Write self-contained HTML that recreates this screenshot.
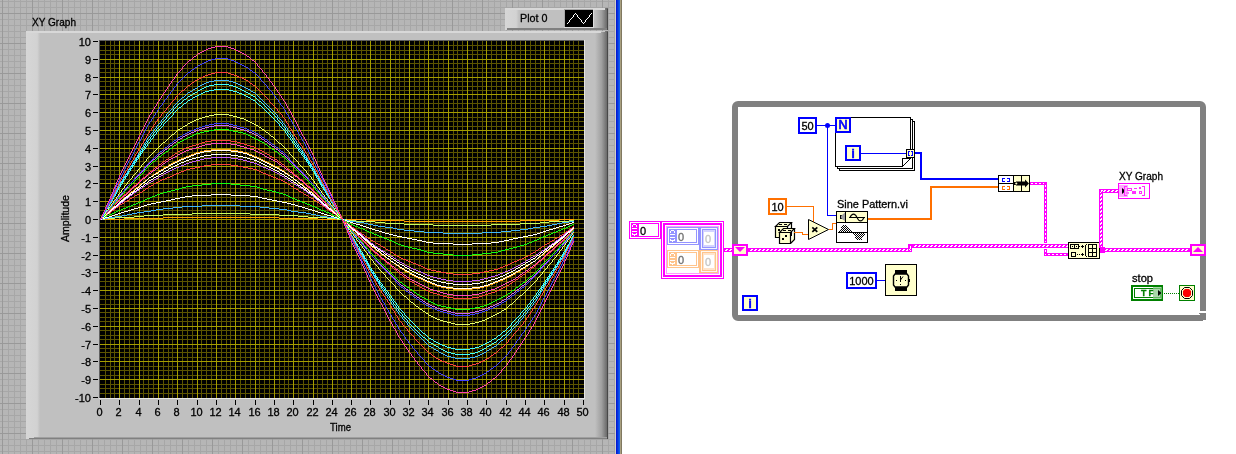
<!DOCTYPE html>
<html><head><meta charset="utf-8"><title>XY Graph</title>
<style>html,body{margin:0;padding:0;background:#fff;}body{width:1236px;height:454px;overflow:hidden;}svg{display:block;will-change:transform;}text{shape-rendering:auto;}</style>
</head><body>
<svg width="1236" height="454" viewBox="0 0 1236 454" font-family="'Liberation Sans', sans-serif" shape-rendering="crispEdges">
<defs>
<pattern id="pgrid" x="2" y="13" width="30" height="30" patternUnits="userSpaceOnUse">
<rect width="30" height="30" fill="#b6b6b6"/>
<rect x="6" y="0" width="1" height="30" fill="#a7a7a7"/><rect x="12" y="0" width="1" height="30" fill="#a7a7a7"/><rect x="18" y="0" width="1" height="30" fill="#a7a7a7"/><rect x="24" y="0" width="1" height="30" fill="#a7a7a7"/>
<rect y="6" x="0" height="1" width="30" fill="#a7a7a7"/><rect y="12" x="0" height="1" width="30" fill="#a7a7a7"/><rect y="18" x="0" height="1" width="30" fill="#a7a7a7"/><rect y="24" x="0" height="1" width="30" fill="#a7a7a7"/>
<rect x="0" y="0" width="1" height="30" fill="#999"/><rect x="0" y="0" width="30" height="1" fill="#999"/>
</pattern>
<linearGradient id="gl" x1="0" x2="1" y1="0" y2="0"><stop offset="0" stop-color="#d6d6d6"/><stop offset="0.8" stop-color="#d2d2d2"/><stop offset="1" stop-color="#c0c0c0"/></linearGradient>
<linearGradient id="gr" x1="0" x2="1" y1="0" y2="0"><stop offset="0" stop-color="#c0c0c0"/><stop offset="0.5" stop-color="#a0a0a0"/><stop offset="1" stop-color="#606060"/></linearGradient>
<linearGradient id="gb" x1="0" x2="1" y1="0" y2="0"><stop offset="0" stop-color="#0010d0"/><stop offset="1" stop-color="#1068f4"/></linearGradient>
<pattern id="wh" x="0" y="0" width="4" height="4" patternUnits="userSpaceOnUse">
<rect width="4" height="4" fill="#ff00ff"/><rect x="1" y="1" width="2" height="1" fill="#fff"/><rect x="0" y="2" width="2" height="1" fill="#fff"/>
</pattern>
<pattern id="wv" x="3" y="0" width="4" height="4" patternUnits="userSpaceOnUse">
<rect width="4" height="4" fill="#ff00ff"/><rect x="2" y="0" width="1" height="2" fill="#fff"/><rect x="1" y="1" width="1" height="2" fill="#fff"/>
</pattern>
<pattern id="w3h" x="0" y="0" width="4" height="3" patternUnits="userSpaceOnUse">
<rect width="4" height="3" fill="#ff00ff"/><rect x="0" y="1" width="2" height="1" fill="#fff"/>
</pattern>
<pattern id="w3v" x="0" y="0" width="3" height="4" patternUnits="userSpaceOnUse">
<rect width="3" height="4" fill="#ff00ff"/><rect x="1" y="0" width="1" height="2" fill="#fff"/>
</pattern>
<pattern id="chk" x="0" y="0" width="2" height="2" patternUnits="userSpaceOnUse">
<rect width="2" height="2" fill="#fff"/><rect x="0" y="0" width="1" height="1" fill="#000"/><rect x="1" y="1" width="1" height="1" fill="#000"/>
</pattern>
</defs>
<rect x="0" y="0" width="1236" height="454" fill="#fff" />
<rect x="0" y="0" width="616" height="454" fill="url(#pgrid)" />
<rect x="615" y="0" width="1" height="454" fill="#d4d0c8" />
<rect x="616" y="0" width="4" height="454" fill="url(#gb)" />
<rect x="620" y="0" width="1" height="454" fill="#a8a080" />
<rect x="621" y="0" width="1" height="454" fill="#807860" />
<rect x="26" y="31" width="582" height="408" fill="#c0c0c0" />
<rect x="26" y="31" width="14" height="408" fill="url(#gl)" />
<rect x="595" y="31" width="13" height="408" fill="url(#gr)" />
<rect x="26" y="31" width="575" height="2" fill="#d8d8d8" />
<rect x="601" y="31" width="4" height="1" fill="#c8c8c8" />
<rect x="34" y="437" width="574" height="1" fill="#a0a0a0" />
<rect x="29" y="438" width="579" height="1" fill="#808080" />
<rect x="607" y="32" width="1" height="407" fill="#484848" />
<rect x="505" y="8" width="103" height="22" fill="#c0c0c0" />
<rect x="505" y="8" width="14" height="22" fill="url(#gl)" />
<rect x="595" y="8" width="13" height="22" fill="url(#gr)" />
<rect x="505" y="8" width="100" height="2" fill="#d8d8d8" />
<rect x="507" y="28" width="101" height="2" fill="#808080" />
<rect x="607" y="9" width="1" height="21" fill="#484848" />
<text x="520" y="22" font-size="11" text-anchor="start" fill="#000" stroke="#000" stroke-width="0.3" textLength="27.5" lengthAdjust="spacingAndGlyphs" >Plot 0</text>
<rect x="564" y="9" width="30" height="19" fill="#dcdcdc" />
<rect x="564" y="9" width="29" height="18" fill="#a8a8a8" />
<rect x="565" y="10" width="28" height="17" fill="#000" />
<path d="M575 13h1M591 13h1M574 14h1M576 14h1M590 14h1M573 15h1M577 15h1M589 15h1M573 16h1M577 16h1M589 16h1M572 17h1M578 17h1M588 17h1M571 18h1M579 18h1M587 18h1M570 19h1M580 19h1M586 19h1M569 20h1M581 20h1M585 20h1M569 21h1M581 21h1M585 21h1M568 22h1M582 22h1M584 22h1M567 23h1M583 23h1" stroke="#fff" stroke-width="1" fill="none" transform="translate(0,0.5)"/>
<text x="32" y="26" font-size="11" text-anchor="start" fill="#000" stroke="#000" stroke-width="0.3" textLength="44" lengthAdjust="spacingAndGlyphs" >XY Graph</text>
<rect x="99" y="40" width="486" height="359" fill="#e4e4e4" />
<rect x="99" y="40" width="485" height="358" fill="#606060" />
<rect x="100" y="41" width="484" height="357" fill="#000" />
<rect x="105" y="41" width="1" height="357" fill="#5c5400" />
<rect x="110" y="41" width="1" height="357" fill="#5c5400" />
<rect x="114" y="41" width="1" height="357" fill="#5c5400" />
<rect x="124" y="41" width="1" height="357" fill="#5c5400" />
<rect x="129" y="41" width="1" height="357" fill="#5c5400" />
<rect x="134" y="41" width="1" height="357" fill="#5c5400" />
<rect x="143" y="41" width="1" height="357" fill="#5c5400" />
<rect x="148" y="41" width="1" height="357" fill="#5c5400" />
<rect x="153" y="41" width="1" height="357" fill="#5c5400" />
<rect x="163" y="41" width="1" height="357" fill="#5c5400" />
<rect x="168" y="41" width="1" height="357" fill="#5c5400" />
<rect x="172" y="41" width="1" height="357" fill="#5c5400" />
<rect x="182" y="41" width="1" height="357" fill="#5c5400" />
<rect x="187" y="41" width="1" height="357" fill="#5c5400" />
<rect x="192" y="41" width="1" height="357" fill="#5c5400" />
<rect x="201" y="41" width="1" height="357" fill="#5c5400" />
<rect x="206" y="41" width="1" height="357" fill="#5c5400" />
<rect x="211" y="41" width="1" height="357" fill="#5c5400" />
<rect x="221" y="41" width="1" height="357" fill="#5c5400" />
<rect x="226" y="41" width="1" height="357" fill="#5c5400" />
<rect x="230" y="41" width="1" height="357" fill="#5c5400" />
<rect x="240" y="41" width="1" height="357" fill="#5c5400" />
<rect x="245" y="41" width="1" height="357" fill="#5c5400" />
<rect x="250" y="41" width="1" height="357" fill="#5c5400" />
<rect x="259" y="41" width="1" height="357" fill="#5c5400" />
<rect x="264" y="41" width="1" height="357" fill="#5c5400" />
<rect x="269" y="41" width="1" height="357" fill="#5c5400" />
<rect x="279" y="41" width="1" height="357" fill="#5c5400" />
<rect x="284" y="41" width="1" height="357" fill="#5c5400" />
<rect x="288" y="41" width="1" height="357" fill="#5c5400" />
<rect x="298" y="41" width="1" height="357" fill="#5c5400" />
<rect x="303" y="41" width="1" height="357" fill="#5c5400" />
<rect x="308" y="41" width="1" height="357" fill="#5c5400" />
<rect x="317" y="41" width="1" height="357" fill="#5c5400" />
<rect x="322" y="41" width="1" height="357" fill="#5c5400" />
<rect x="327" y="41" width="1" height="357" fill="#5c5400" />
<rect x="337" y="41" width="1" height="357" fill="#5c5400" />
<rect x="342" y="41" width="1" height="357" fill="#5c5400" />
<rect x="346" y="41" width="1" height="357" fill="#5c5400" />
<rect x="356" y="41" width="1" height="357" fill="#5c5400" />
<rect x="361" y="41" width="1" height="357" fill="#5c5400" />
<rect x="366" y="41" width="1" height="357" fill="#5c5400" />
<rect x="375" y="41" width="1" height="357" fill="#5c5400" />
<rect x="380" y="41" width="1" height="357" fill="#5c5400" />
<rect x="385" y="41" width="1" height="357" fill="#5c5400" />
<rect x="395" y="41" width="1" height="357" fill="#5c5400" />
<rect x="399" y="41" width="1" height="357" fill="#5c5400" />
<rect x="404" y="41" width="1" height="357" fill="#5c5400" />
<rect x="414" y="41" width="1" height="357" fill="#5c5400" />
<rect x="419" y="41" width="1" height="357" fill="#5c5400" />
<rect x="424" y="41" width="1" height="357" fill="#5c5400" />
<rect x="433" y="41" width="1" height="357" fill="#5c5400" />
<rect x="438" y="41" width="1" height="357" fill="#5c5400" />
<rect x="443" y="41" width="1" height="357" fill="#5c5400" />
<rect x="453" y="41" width="1" height="357" fill="#5c5400" />
<rect x="457" y="41" width="1" height="357" fill="#5c5400" />
<rect x="462" y="41" width="1" height="357" fill="#5c5400" />
<rect x="472" y="41" width="1" height="357" fill="#5c5400" />
<rect x="477" y="41" width="1" height="357" fill="#5c5400" />
<rect x="482" y="41" width="1" height="357" fill="#5c5400" />
<rect x="491" y="41" width="1" height="357" fill="#5c5400" />
<rect x="496" y="41" width="1" height="357" fill="#5c5400" />
<rect x="501" y="41" width="1" height="357" fill="#5c5400" />
<rect x="511" y="41" width="1" height="357" fill="#5c5400" />
<rect x="515" y="41" width="1" height="357" fill="#5c5400" />
<rect x="520" y="41" width="1" height="357" fill="#5c5400" />
<rect x="530" y="41" width="1" height="357" fill="#5c5400" />
<rect x="535" y="41" width="1" height="357" fill="#5c5400" />
<rect x="540" y="41" width="1" height="357" fill="#5c5400" />
<rect x="549" y="41" width="1" height="357" fill="#5c5400" />
<rect x="554" y="41" width="1" height="357" fill="#5c5400" />
<rect x="559" y="41" width="1" height="357" fill="#5c5400" />
<rect x="569" y="41" width="1" height="357" fill="#5c5400" />
<rect x="573" y="41" width="1" height="357" fill="#5c5400" />
<rect x="578" y="41" width="1" height="357" fill="#5c5400" />
<rect x="100" y="45" width="484" height="1" fill="#5c5400" />
<rect x="100" y="50" width="484" height="1" fill="#5c5400" />
<rect x="100" y="54" width="484" height="1" fill="#5c5400" />
<rect x="100" y="63" width="484" height="1" fill="#5c5400" />
<rect x="100" y="68" width="484" height="1" fill="#5c5400" />
<rect x="100" y="72" width="484" height="1" fill="#5c5400" />
<rect x="100" y="81" width="484" height="1" fill="#5c5400" />
<rect x="100" y="86" width="484" height="1" fill="#5c5400" />
<rect x="100" y="90" width="484" height="1" fill="#5c5400" />
<rect x="100" y="99" width="484" height="1" fill="#5c5400" />
<rect x="100" y="103" width="484" height="1" fill="#5c5400" />
<rect x="100" y="108" width="484" height="1" fill="#5c5400" />
<rect x="100" y="117" width="484" height="1" fill="#5c5400" />
<rect x="100" y="121" width="484" height="1" fill="#5c5400" />
<rect x="100" y="126" width="484" height="1" fill="#5c5400" />
<rect x="100" y="134" width="484" height="1" fill="#5c5400" />
<rect x="100" y="139" width="484" height="1" fill="#5c5400" />
<rect x="100" y="143" width="484" height="1" fill="#5c5400" />
<rect x="100" y="152" width="484" height="1" fill="#5c5400" />
<rect x="100" y="157" width="484" height="1" fill="#5c5400" />
<rect x="100" y="161" width="484" height="1" fill="#5c5400" />
<rect x="100" y="170" width="484" height="1" fill="#5c5400" />
<rect x="100" y="174" width="484" height="1" fill="#5c5400" />
<rect x="100" y="179" width="484" height="1" fill="#5c5400" />
<rect x="100" y="188" width="484" height="1" fill="#5c5400" />
<rect x="100" y="192" width="484" height="1" fill="#5c5400" />
<rect x="100" y="197" width="484" height="1" fill="#5c5400" />
<rect x="100" y="206" width="484" height="1" fill="#5c5400" />
<rect x="100" y="210" width="484" height="1" fill="#5c5400" />
<rect x="100" y="215" width="484" height="1" fill="#5c5400" />
<rect x="100" y="223" width="484" height="1" fill="#5c5400" />
<rect x="100" y="228" width="484" height="1" fill="#5c5400" />
<rect x="100" y="232" width="484" height="1" fill="#5c5400" />
<rect x="100" y="241" width="484" height="1" fill="#5c5400" />
<rect x="100" y="246" width="484" height="1" fill="#5c5400" />
<rect x="100" y="250" width="484" height="1" fill="#5c5400" />
<rect x="100" y="259" width="484" height="1" fill="#5c5400" />
<rect x="100" y="264" width="484" height="1" fill="#5c5400" />
<rect x="100" y="268" width="484" height="1" fill="#5c5400" />
<rect x="100" y="277" width="484" height="1" fill="#5c5400" />
<rect x="100" y="281" width="484" height="1" fill="#5c5400" />
<rect x="100" y="286" width="484" height="1" fill="#5c5400" />
<rect x="100" y="295" width="484" height="1" fill="#5c5400" />
<rect x="100" y="299" width="484" height="1" fill="#5c5400" />
<rect x="100" y="304" width="484" height="1" fill="#5c5400" />
<rect x="100" y="312" width="484" height="1" fill="#5c5400" />
<rect x="100" y="317" width="484" height="1" fill="#5c5400" />
<rect x="100" y="321" width="484" height="1" fill="#5c5400" />
<rect x="100" y="330" width="484" height="1" fill="#5c5400" />
<rect x="100" y="335" width="484" height="1" fill="#5c5400" />
<rect x="100" y="339" width="484" height="1" fill="#5c5400" />
<rect x="100" y="348" width="484" height="1" fill="#5c5400" />
<rect x="100" y="352" width="484" height="1" fill="#5c5400" />
<rect x="100" y="357" width="484" height="1" fill="#5c5400" />
<rect x="100" y="366" width="484" height="1" fill="#5c5400" />
<rect x="100" y="370" width="484" height="1" fill="#5c5400" />
<rect x="100" y="375" width="484" height="1" fill="#5c5400" />
<rect x="100" y="384" width="484" height="1" fill="#5c5400" />
<rect x="100" y="388" width="484" height="1" fill="#5c5400" />
<rect x="100" y="393" width="484" height="1" fill="#5c5400" />
<rect x="119" y="41" width="1" height="357" fill="#a49c00" />
<rect x="139" y="41" width="1" height="357" fill="#a49c00" />
<rect x="158" y="41" width="1" height="357" fill="#a49c00" />
<rect x="177" y="41" width="1" height="357" fill="#a49c00" />
<rect x="197" y="41" width="1" height="357" fill="#a49c00" />
<rect x="216" y="41" width="1" height="357" fill="#a49c00" />
<rect x="235" y="41" width="1" height="357" fill="#a49c00" />
<rect x="255" y="41" width="1" height="357" fill="#a49c00" />
<rect x="274" y="41" width="1" height="357" fill="#a49c00" />
<rect x="293" y="41" width="1" height="357" fill="#a49c00" />
<rect x="313" y="41" width="1" height="357" fill="#a49c00" />
<rect x="332" y="41" width="1" height="357" fill="#a49c00" />
<rect x="351" y="41" width="1" height="357" fill="#a49c00" />
<rect x="370" y="41" width="1" height="357" fill="#a49c00" />
<rect x="390" y="41" width="1" height="357" fill="#a49c00" />
<rect x="409" y="41" width="1" height="357" fill="#a49c00" />
<rect x="428" y="41" width="1" height="357" fill="#a49c00" />
<rect x="448" y="41" width="1" height="357" fill="#a49c00" />
<rect x="467" y="41" width="1" height="357" fill="#a49c00" />
<rect x="486" y="41" width="1" height="357" fill="#a49c00" />
<rect x="506" y="41" width="1" height="357" fill="#a49c00" />
<rect x="525" y="41" width="1" height="357" fill="#a49c00" />
<rect x="544" y="41" width="1" height="357" fill="#a49c00" />
<rect x="564" y="41" width="1" height="357" fill="#a49c00" />
<rect x="100" y="59" width="484" height="1" fill="#a49c00" />
<rect x="100" y="77" width="484" height="1" fill="#a49c00" />
<rect x="100" y="94" width="484" height="1" fill="#a49c00" />
<rect x="100" y="112" width="484" height="1" fill="#a49c00" />
<rect x="100" y="130" width="484" height="1" fill="#a49c00" />
<rect x="100" y="148" width="484" height="1" fill="#a49c00" />
<rect x="100" y="166" width="484" height="1" fill="#a49c00" />
<rect x="100" y="183" width="484" height="1" fill="#a49c00" />
<rect x="100" y="201" width="484" height="1" fill="#a49c00" />
<rect x="100" y="219" width="484" height="1" fill="#a49c00" />
<rect x="100" y="237" width="484" height="1" fill="#a49c00" />
<rect x="100" y="255" width="484" height="1" fill="#a49c00" />
<rect x="100" y="272" width="484" height="1" fill="#a49c00" />
<rect x="100" y="290" width="484" height="1" fill="#a49c00" />
<rect x="100" y="308" width="484" height="1" fill="#a49c00" />
<rect x="100" y="326" width="484" height="1" fill="#a49c00" />
<rect x="100" y="344" width="484" height="1" fill="#a49c00" />
<rect x="100" y="361" width="484" height="1" fill="#a49c00" />
<rect x="100" y="379" width="484" height="1" fill="#a49c00" />
<path d="M163 217h116M124 218h39M279 218h39M100 219h24M318 219h48M559 219h15M366 220h38M520 220h39M404 221h116" stroke="#ffa000" stroke-width="1" fill="none" transform="translate(0,0.5)"/>
<path d="M192 213h58M163 214h29M250 214h29M144 215h19M279 215h19M134 216h10M298 216h10M115 217h19M308 217h19M105 218h10M327 218h10M100 219h5M337 219h10M347 220h9M569 220h5M356 221h19M549 221h20M375 222h10M540 222h9M385 223h19M520 223h20M404 224h29M491 224h29M433 225h58" stroke="#c8ff60" stroke-width="1" fill="none" transform="translate(0,0.5)"/>
<path d="M202 205h38M182 206h20M240 206h20M173 207h9M260 207h9M163 208h10M269 208h10M156 209h7M279 209h8M151 210h5M287 210h4M144 211h7M291 211h7M137 212h7M298 212h8M132 213h5M306 213h5M127 214h5M311 214h5M122 215h5M316 215h4M115 216h7M320 216h7M108 217h7M327 217h8M103 218h5M335 218h5M100 219h3M340 219h5M345 220h4M349 221h7M569 221h5M356 222h8M562 222h7M364 223h4M557 223h5M368 224h5M552 224h5M373 225h5M547 225h5M378 226h7M540 226h7M385 227h8M533 227h7M393 228h4M528 228h5M397 229h7M520 229h8M404 230h10M511 230h9M414 231h10M501 231h10M424 232h19M482 232h19M443 233h39" stroke="#40b8ff" stroke-width="1" fill="none" transform="translate(0,0.5)"/>
<path d="M211 194h20M192 195h19M231 195h19M185 196h7M250 196h8M180 197h5M258 197h4M175 198h5M262 198h5M171 199h4M267 199h5M166 200h5M272 200h5M161 201h5M277 201h5M156 202h5M282 202h5M151 203h5M287 203h4M147 204h4M291 204h4M144 205h3M295 205h3M141 206h3M298 206h4M138 207h3M302 207h3M134 208h4M305 208h3M131 209h3M308 209h4M128 210h3M312 210h3M124 211h4M315 211h3M121 212h3M318 212h3M118 213h3M321 213h3M115 214h3M324 214h3M112 215h3M327 215h4M109 216h3M331 216h3M105 217h4M334 217h3M102 218h3M337 218h4M100 219h2M341 219h3M344 220h3M347 221h3M350 222h3M572 222h2M353 223h3M569 223h3M356 224h4M566 224h3M360 225h3M563 225h3M363 226h3M559 226h4M366 227h3M556 227h3M369 228h3M553 228h3M372 229h3M549 229h4M375 230h4M546 230h3M379 231h3M543 231h3M382 232h3M540 232h3M385 233h4M537 233h3M389 234h4M533 234h4M393 235h4M528 235h5M397 236h5M523 236h5M402 237h5M518 237h5M407 238h5M513 238h5M412 239h5M509 239h4M417 240h5M504 240h5M422 241h4M499 241h5M426 242h7M491 242h8M433 243h20M472 243h19M453 244h19" stroke="#ffffff" stroke-width="1" fill="none" transform="translate(0,0.5)"/>
<path d="M211 183h20M202 184h9M231 184h9M192 185h10M240 185h10M186 186h6M250 186h7M182 187h4M257 187h3M179 188h3M260 188h3M175 189h4M263 189h4M171 190h4M267 190h5M167 191h4M272 191h4M163 192h4M276 192h3M160 193h3M279 193h4M157 194h3M283 194h3M155 195h2M286 195h2M152 196h3M288 196h2M150 197h2M290 197h2M147 198h3M292 198h3M145 199h2M295 199h2M143 200h2M297 200h3M141 201h2M300 201h2M138 202h3M302 202h3M136 203h2M305 203h2M133 204h3M307 204h3M131 205h2M310 205h2M128 206h3M312 206h3M126 207h2M315 207h2M123 208h3M317 208h2M121 209h2M319 209h2M118 210h3M321 210h3M116 211h2M324 211h2M114 212h2M326 212h3M112 213h2M329 213h2M109 214h3M331 214h2M107 215h2M333 215h2M105 216h2M335 216h2M103 217h2M337 217h2M101 218h2M339 218h2M100 219h1M341 219h2M343 220h2M345 221h2M347 222h2M349 223h2M351 224h2M572 224h2M353 225h2M570 225h2M355 226h3M568 226h2M358 227h2M566 227h2M360 228h3M563 228h3M363 229h2M561 229h2M365 230h2M558 230h3M367 231h2M556 231h2M369 232h3M553 232h3M372 233h2M551 233h2M374 234h3M548 234h3M377 235h2M546 235h2M379 236h3M543 236h3M382 237h2M541 237h2M384 238h3M539 238h2M387 239h2M537 239h2M389 240h3M534 240h3M392 241h2M532 241h2M394 242h2M529 242h3M396 243h2M527 243h2M398 244h3M524 244h3M401 245h3M520 245h4M404 246h4M517 246h3M408 247h4M513 247h4M412 248h5M509 248h4M417 249h4M505 249h4M421 250h3M501 250h4M424 251h3M498 251h3M427 252h6M491 252h7M433 253h10M482 253h9M443 254h10M472 254h10M453 255h19" stroke="#10ff10" stroke-width="1" fill="none" transform="translate(0,0.5)"/>
<path d="M211 164h20M204 165h7M231 165h7M200 166h4M238 166h5M195 167h5M243 167h5M190 168h5M248 168h5M186 169h4M253 169h4M184 170h2M257 170h2M181 171h3M259 171h2M179 172h2M261 172h2M176 173h3M263 173h3M174 174h2M266 174h2M172 175h2M268 175h3M170 176h2M271 176h2M167 177h3M273 177h3M165 178h2M276 178h2M162 179h3M278 179h3M160 180h2M281 180h2M158 181h2M283 181h2M156 182h2M285 182h2M154 183h2M287 183h1M153 184h1M288 184h2M151 185h2M290 185h1M149 186h2M291 186h2M148 187h1M293 187h1M146 188h2M294 188h2M145 189h1M296 189h2M143 190h2M298 190h1M142 191h1M299 191h2M140 192h2M301 192h2M139 193h1M303 193h1M137 194h2M304 194h2M135 195h2M306 195h2M134 196h1M308 196h1M132 197h2M309 197h2M130 198h2M311 198h2M129 199h1M313 199h1M127 200h2M314 200h2M125 201h2M316 201h1M124 202h1M317 202h2M122 203h2M319 203h1M120 204h2M320 204h2M119 205h1M322 205h1M118 206h1M323 206h2M116 207h2M325 207h1M115 208h1M326 208h1M114 209h1M327 209h2M112 210h2M329 210h1M111 211h1M330 211h2M110 212h1M332 212h1M108 213h2M333 213h2M107 214h1M335 214h1M105 215h2M336 215h1M104 216h1M337 216h2M103 217h1M339 217h1M101 218h2M340 218h2M100 219h1M342 219h1M343 220h1M344 221h2M346 222h1M347 223h1M348 224h2M350 225h1M351 226h1M573 226h1M352 227h2M572 227h1M354 228h1M570 228h2M355 229h1M569 229h1M356 230h2M568 230h1M358 231h1M566 231h2M359 232h2M565 232h1M361 233h1M564 233h1M362 234h2M562 234h2M364 235h1M560 235h2M365 236h2M559 236h1M367 237h1M557 237h2M368 238h2M555 238h2M370 239h1M554 239h1M371 240h2M552 240h2M373 241h2M550 241h2M375 242h1M549 242h1M376 243h2M547 243h2M378 244h2M545 244h2M380 245h1M544 245h1M381 246h2M542 246h2M383 247h2M541 247h1M385 248h1M539 248h2M386 249h2M538 249h1M388 250h2M536 250h2M390 251h1M535 251h1M391 252h2M533 252h2M393 253h1M531 253h2M394 254h2M530 254h1M396 255h1M528 255h2M397 256h2M526 256h2M399 257h2M524 257h2M401 258h2M522 258h2M403 259h3M519 259h3M406 260h2M517 260h2M408 261h3M514 261h3M411 262h2M512 262h2M413 263h3M510 263h2M416 264h2M508 264h2M418 265h3M505 265h3M421 266h2M503 266h2M423 267h2M500 267h3M425 268h2M498 268h2M427 269h4M494 269h4M431 270h5M489 270h5M436 271h5M484 271h5M441 272h5M480 272h4M446 273h7M472 273h8M453 274h19" stroke="#ff4040" stroke-width="1" fill="none" transform="translate(0,0.5)"/>
<path d="M211 157h20M204 158h7M231 158h7M200 159h4M238 159h5M196 160h4M243 160h4M192 161h4M247 161h3M189 162h3M250 162h4M186 163h3M254 163h3M184 164h2M257 164h2M181 165h3M259 165h2M179 166h2M261 166h2M176 167h3M263 167h3M174 168h2M266 168h2M172 169h2M268 169h3M170 170h2M271 170h2M168 171h2M273 171h2M166 172h2M275 172h2M164 173h2M277 173h2M163 174h1M279 174h1M161 175h2M280 175h2M159 176h2M282 176h2M158 177h1M284 177h1M156 178h2M285 178h2M154 179h2M287 179h1M153 180h1M288 180h2M151 181h2M290 181h1M149 182h2M291 182h2M148 183h1M293 183h1M146 184h2M294 184h2M145 185h1M296 185h2M143 186h2M298 186h1M142 187h1M299 187h2M140 188h2M301 188h2M139 189h1M303 189h1M137 190h2M304 190h2M136 191h1M306 191h1M134 192h2M307 192h1M133 193h1M308 193h2M132 194h1M310 194h1M130 195h2M311 195h2M129 196h1M313 196h1M128 197h1M314 197h1M126 198h2M315 198h1M125 199h1M316 199h1M124 200h1M317 200h2M123 201h1M319 201h1M121 202h2M320 202h1M120 203h1M321 203h1M119 204h1M322 204h1M118 205h1M323 205h2M116 206h2M325 206h1M115 207h1M326 207h1M114 208h1M327 208h2M112 209h2M329 209h1M111 210h1M330 210h2M110 211h1M332 211h1M109 212h1M333 212h1M107 213h2M334 213h2M106 214h1M336 214h1M105 215h1M337 215h1M104 216h1M338 216h1M102 217h2M339 217h2M101 218h1M341 218h1M100 219h1M342 219h1M343 220h1M344 221h1M345 222h1M346 223h2M348 224h1M349 225h1M350 226h1M351 227h1M573 227h1M352 228h2M572 228h1M354 229h1M570 229h2M355 230h1M569 230h1M356 231h2M568 231h1M358 232h1M566 232h2M359 233h2M565 233h1M361 234h1M564 234h1M362 235h1M563 235h1M363 236h1M561 236h2M364 237h1M560 237h1M365 238h2M559 238h1M367 239h1M558 239h1M368 240h1M556 240h2M369 241h1M555 241h1M370 242h1M554 242h1M371 243h2M552 243h2M373 244h1M551 244h1M374 245h1M549 245h2M375 246h2M548 246h1M377 247h1M547 247h1M378 248h2M545 248h2M380 249h1M544 249h1M381 250h2M542 250h2M383 251h2M541 251h1M385 252h1M539 252h2M386 253h2M538 253h1M388 254h2M536 254h2M390 255h1M535 255h1M391 256h2M533 256h2M393 257h1M531 257h2M394 258h2M530 258h1M396 259h1M528 259h2M397 260h2M526 260h2M399 261h1M525 261h1M400 262h2M523 262h2M402 263h2M521 263h2M404 264h1M520 264h1M405 265h2M518 265h2M407 266h2M516 266h2M409 267h2M514 267h2M411 268h2M512 268h2M413 269h3M510 269h2M416 270h2M508 270h2M418 271h3M505 271h3M421 272h2M503 272h2M423 273h2M500 273h3M425 274h2M498 274h2M427 275h3M495 275h3M430 276h3M491 276h4M433 277h4M488 277h3M437 278h4M484 278h4M441 279h5M480 279h4M446 280h7M472 280h8M453 281h19" stroke="#c860ff" stroke-width="1" fill="none" transform="translate(0,0.5)"/>
<path d="M211 154h20M204 155h7M231 155h7M200 156h4M238 156h5M196 157h4M243 157h4M192 158h4M247 158h3M189 159h3M250 159h4M186 160h3M254 160h3M184 161h2M257 161h2M181 162h3M259 162h2M179 163h2M261 163h2M177 164h2M263 164h2M175 165h2M265 165h2M173 166h2M267 166h2M171 167h2M269 167h2M169 168h2M271 168h2M168 169h1M273 169h2M166 170h2M275 170h2M164 171h2M277 171h2M163 172h1M279 172h1M161 173h2M280 173h2M159 174h2M282 174h2M158 175h1M284 175h1M156 176h2M285 176h2M154 177h2M287 177h1M153 178h1M288 178h2M151 179h2M290 179h1M149 180h2M291 180h2M148 181h1M293 181h1M147 182h1M294 182h2M145 183h2M296 183h1M144 184h1M297 184h1M143 185h1M298 185h2M141 186h2M300 186h1M140 187h1M301 187h2M139 188h1M303 188h1M137 189h2M304 189h2M136 190h1M306 190h1M134 191h2M307 191h1M133 192h1M308 192h2M132 193h1M310 193h1M130 194h2M311 194h2M129 195h1M313 195h1M128 196h1M314 196h1M126 197h2M315 197h1M125 198h1M316 198h1M124 199h1M317 199h2M123 200h1M319 200h1M121 201h2M320 201h1M120 202h1M321 202h1M119 203h1M322 203h1M118 204h1M323 204h1M117 205h1M324 205h2M116 206h1M326 206h1M114 207h2M327 207h1M113 208h1M328 208h1M112 209h1M329 209h2M111 210h1M331 210h1M110 211h1M332 211h1M109 212h1M333 212h1M107 213h2M334 213h2M106 214h1M336 214h1M105 215h1M337 215h1M104 216h1M338 216h1M102 217h2M339 217h2M101 218h1M341 218h1M100 219h1M342 219h1M343 220h1M344 221h1M345 222h1M346 223h2M348 224h1M349 225h1M350 226h1M351 227h1M573 227h1M352 228h1M572 228h1M353 229h2M571 229h1M355 230h1M570 230h1M356 231h1M568 231h2M357 232h1M567 232h1M358 233h2M566 233h1M360 234h1M565 234h1M361 235h1M564 235h1M362 236h1M563 236h1M363 237h1M561 237h2M364 238h1M560 238h1M365 239h2M559 239h1M367 240h1M558 240h1M368 241h1M556 241h2M369 242h1M555 242h1M370 243h1M554 243h1M371 244h2M552 244h2M373 245h1M551 245h1M374 246h1M549 246h2M375 247h2M548 247h1M377 248h1M547 248h1M378 249h2M545 249h2M380 250h1M544 250h1M381 251h2M543 251h1M383 252h1M541 252h2M384 253h1M540 253h1M385 254h2M539 254h1M387 255h1M537 255h2M388 256h2M536 256h1M390 257h1M535 257h1M391 258h2M533 258h2M393 259h1M531 259h2M394 260h2M530 260h1M396 261h1M528 261h2M397 262h2M526 262h2M399 263h1M525 263h1M400 264h2M523 264h2M402 265h2M521 265h2M404 266h1M520 266h1M405 267h2M518 267h2M407 268h2M516 268h2M409 269h1M515 269h1M410 270h2M513 270h2M412 271h2M511 271h2M414 272h2M509 272h2M416 273h2M507 273h2M418 274h3M505 274h2M421 275h2M503 275h2M423 276h2M500 276h3M425 277h2M498 277h2M427 278h3M495 278h3M430 279h3M491 279h4M433 280h4M488 280h3M437 281h4M484 281h4M441 282h5M480 282h4M446 283h7M472 283h8M453 284h19" stroke="#ffffff" stroke-width="1" fill="none" transform="translate(0,0.5)"/>
<path d="M211 149h20M204 150h7M231 150h7M200 151h4M238 151h5M196 152h4M243 152h4M194 153h2M247 153h2M191 154h3M249 154h3M189 155h2M252 155h2M186 156h3M254 156h3M184 157h2M257 157h2M181 158h3M259 158h2M179 159h2M261 159h2M177 160h2M263 160h2M175 161h2M265 161h2M173 162h2M267 162h2M171 163h2M269 163h2M169 164h2M271 164h2M168 165h1M273 165h2M166 166h2M275 166h2M164 167h2M277 167h2M163 168h1M279 168h1M161 169h2M280 169h2M159 170h2M282 170h2M158 171h1M284 171h1M156 172h2M285 172h1M155 173h1M286 173h2M153 174h2M288 174h1M152 175h1M289 175h1M151 176h1M290 176h2M149 177h2M292 177h1M148 178h1M293 178h1M147 179h1M294 179h2M145 180h2M296 180h1M144 181h1M297 181h1M143 182h1M298 182h2M141 183h2M300 183h1M140 184h1M301 184h2M139 185h1M303 185h1M138 186h1M304 186h1M136 187h2M305 187h2M135 188h1M307 188h1M134 189h1M308 189h1M133 190h1M309 190h1M131 191h2M310 191h2M130 192h1M312 192h1M129 193h1M313 193h1M128 194h1M314 194h1M127 195h1M315 195h1M126 196h1M316 196h1M124 197h2M317 197h1M123 198h1M318 198h1M122 199h1M319 199h1M121 200h1M320 200h1M120 201h1M321 201h1M119 202h1M322 202h1M118 203h1M323 203h1M117 204h1M324 204h2M116 205h1M326 205h1M114 206h2M327 206h1M113 207h1M328 207h1M112 208h1M329 208h2M111 209h1M331 209h1M110 210h1M332 210h1M109 211h1M333 211h1M108 212h1M334 212h1M107 213h1M335 213h1M105 214h2M336 214h1M104 215h1M337 215h2M103 216h1M339 216h1M102 217h1M340 217h1M101 218h1M341 218h1M100 219h1M342 219h1M343 220h1M344 221h1M345 222h1M346 223h1M347 224h1M348 225h1M349 226h1M350 227h1M351 228h1M573 228h1M352 229h1M572 229h1M353 230h2M571 230h1M355 231h1M570 231h1M356 232h1M568 232h2M357 233h1M567 233h1M358 234h2M566 234h1M360 235h1M565 235h1M361 236h1M564 236h1M362 237h1M563 237h1M363 238h1M562 238h1M364 239h1M561 239h1M365 240h1M559 240h2M366 241h1M558 241h1M367 242h1M557 242h1M368 243h1M556 243h1M369 244h1M555 244h1M370 245h1M554 245h1M371 246h1M553 246h1M372 247h2M551 247h2M374 248h1M550 248h1M375 249h1M549 249h1M376 250h1M548 250h1M377 251h2M546 251h2M379 252h1M545 252h1M380 253h1M544 253h1M381 254h2M543 254h1M383 255h1M541 255h2M384 256h1M540 256h1M385 257h2M539 257h1M387 258h1M537 258h2M388 259h2M536 259h1M390 260h1M535 260h1M391 261h1M533 261h2M392 262h2M532 262h1M394 263h1M530 263h2M395 264h1M529 264h1M396 265h2M528 265h1M398 266h1M526 266h2M399 267h1M525 267h1M400 268h2M523 268h2M402 269h2M521 269h2M404 270h1M520 270h1M405 271h2M518 271h2M407 272h2M516 272h2M409 273h1M515 273h1M410 274h2M513 274h2M412 275h2M511 275h2M414 276h2M509 276h2M416 277h2M507 277h2M418 278h3M505 278h2M421 279h2M503 279h2M423 280h2M500 280h3M425 281h2M498 281h2M427 282h3M495 282h3M430 283h2M493 283h2M432 284h3M490 284h3M435 285h2M488 285h2M437 286h4M484 286h4M441 287h5M480 287h4M446 288h7M472 288h8M453 289h19" stroke="#ffa818" stroke-width="1" fill="none" transform="translate(0,0.5)"/>
<path d="M211 150h20M204 151h7M231 151h7M200 152h4M238 152h5M196 153h4M243 153h4M194 154h2M247 154h2M191 155h3M249 155h3M189 156h2M252 156h2M186 157h3M254 157h3M184 158h2M257 158h2M181 159h3M259 159h2M179 160h2M261 160h2M177 161h2M263 161h2M175 162h2M265 162h2M173 163h2M267 163h2M171 164h2M269 164h2M169 165h2M271 165h2M168 166h1M273 166h2M166 167h2M275 167h2M164 168h2M277 168h2M163 169h1M279 169h1M161 170h2M280 170h2M159 171h2M282 171h2M158 172h1M284 172h1M156 173h2M285 173h2M154 174h2M287 174h1M153 175h1M288 175h2M151 176h2M290 176h1M149 177h2M291 177h2M148 178h1M293 178h1M147 179h1M294 179h1M146 180h1M295 180h2M145 181h1M297 181h1M143 182h2M298 182h1M142 183h1M299 183h1M141 184h1M300 184h2M140 185h1M302 185h1M139 186h1M303 186h1M138 187h1M304 187h1M136 188h2M305 188h2M135 189h1M307 189h1M134 190h1M308 190h1M133 191h1M309 191h1M131 192h2M310 192h2M130 193h1M312 193h1M129 194h1M313 194h1M128 195h1M314 195h1M126 196h2M315 196h1M125 197h1M316 197h1M124 198h1M317 198h2M123 199h1M319 199h1M121 200h2M320 200h1M120 201h1M321 201h1M119 202h1M322 202h1M118 203h1M323 203h1M117 204h1M324 204h2M116 205h1M326 205h1M114 206h2M327 206h1M113 207h1M328 207h1M112 208h1M329 208h2M111 209h1M331 209h1M110 210h1M332 210h1M109 211h1M333 211h1M108 212h1M334 212h1M107 213h1M335 213h1M105 214h2M336 214h1M104 215h1M337 215h2M103 216h1M339 216h1M102 217h1M340 217h1M101 218h1M341 218h1M100 219h1M342 219h1M343 220h1M344 221h1M345 222h1M346 223h1M347 224h1M348 225h1M349 226h1M350 227h1M351 228h1M573 228h1M352 229h1M572 229h1M353 230h2M571 230h1M355 231h1M570 231h1M356 232h1M568 232h2M357 233h1M567 233h1M358 234h2M566 234h1M360 235h1M565 235h1M361 236h1M564 236h1M362 237h1M563 237h1M363 238h1M561 238h2M364 239h1M560 239h1M365 240h2M559 240h1M367 241h1M558 241h1M368 242h1M556 242h2M369 243h1M555 243h1M370 244h1M554 244h1M371 245h1M553 245h1M372 246h2M551 246h2M374 247h1M550 247h1M375 248h1M549 248h1M376 249h1M548 249h1M377 250h2M546 250h2M379 251h1M545 251h1M380 252h1M544 252h1M381 253h1M543 253h1M382 254h2M542 254h1M384 255h1M541 255h1M385 256h1M539 256h2M386 257h1M538 257h1M387 258h2M537 258h1M389 259h1M536 259h1M390 260h1M535 260h1M391 261h2M533 261h2M393 262h1M531 262h2M394 263h2M530 263h1M396 264h1M528 264h2M397 265h2M526 265h2M399 266h1M525 266h1M400 267h2M523 267h2M402 268h2M521 268h2M404 269h1M520 269h1M405 270h2M518 270h2M407 271h2M516 271h2M409 272h1M515 272h1M410 273h2M513 273h2M412 274h2M511 274h2M414 275h2M509 275h2M416 276h2M507 276h2M418 277h3M505 277h2M421 278h2M503 278h2M423 279h2M500 279h3M425 280h2M498 280h2M427 281h3M495 281h3M430 282h2M493 282h2M432 283h3M490 283h3M435 284h2M488 284h2M437 285h4M484 285h4M441 286h5M480 286h4M446 287h7M472 287h8M453 288h19" stroke="#ffffff" stroke-width="1" fill="none" transform="translate(0,0.5)"/>
<path d="M211 143h20M205 144h6M231 144h6M202 145h3M237 145h3M199 146h3M240 146h4M196 147h3M244 147h3M192 148h4M247 148h3M189 149h3M250 149h4M186 150h3M254 150h2M184 151h2M256 151h2M182 152h2M258 152h2M180 153h2M260 153h2M178 154h2M262 154h2M177 155h1M264 155h1M175 156h2M265 156h2M173 157h2M267 157h2M171 158h2M269 158h2M169 159h2M271 159h2M168 160h1M273 160h2M166 161h2M275 161h2M165 162h1M277 162h1M163 163h2M278 163h1M162 164h1M279 164h2M161 165h1M281 165h1M159 166h2M282 166h2M158 167h1M284 167h1M156 168h2M285 168h1M155 169h1M286 169h2M153 170h2M288 170h1M152 171h1M289 171h1M151 172h1M290 172h2M149 173h2M292 173h1M148 174h1M293 174h1M147 175h1M294 175h1M146 176h1M295 176h2M145 177h1M297 177h1M143 178h2M298 178h1M142 179h1M299 179h1M141 180h1M300 180h2M140 181h1M302 181h1M139 182h1M303 182h1M138 183h1M304 183h1M137 184h1M305 184h1M136 185h1M306 185h1M134 186h2M307 186h1M133 187h1M308 187h2M132 188h1M310 188h1M131 189h1M311 189h1M130 190h1M312 190h1M129 191h1M313 191h1M128 192h1M314 192h1M127 193h1M315 193h1M126 194h1M316 194h1M124 195h2M317 195h1M123 196h1M318 196h1M122 197h1M319 197h1M121 198h1M320 198h1M120 199h1M321 199h1M119 200h1M322 200h1M118 201h1M323 201h1M117 202h1M324 202h1M116 203h1M325 203h1M115 204h1M326 204h1M114 205h1M327 205h2M113 206h1M329 206h1M112 207h1M330 207h1M111 208h1M331 208h1M110 209h1M332 209h1M109 210h1M333 210h1M108 211h1M334 211h1M107 212h1M335 212h1M106 213h1M336 213h1M105 214h1M337 214h1M104 215h1M338 215h1M103 216h1M339 216h1M102 217h1M340 217h1M101 218h1M341 218h1M100 219h1M342 219h1M343 220h1M344 221h1M345 222h1M346 223h1M347 224h1M347 225h1M348 226h1M349 227h1M350 228h1M351 229h1M573 229h1M352 230h1M572 230h1M353 231h1M571 231h1M354 232h1M570 232h1M355 233h1M569 233h1M356 234h2M568 234h1M358 235h1M567 235h1M359 236h1M566 236h1M360 237h1M565 237h1M361 238h1M564 238h1M362 239h1M563 239h1M363 240h1M562 240h1M364 241h1M561 241h1M365 242h1M559 242h2M366 243h1M558 243h1M367 244h1M557 244h1M368 245h1M556 245h1M369 246h1M555 246h1M370 247h1M554 247h1M371 248h1M553 248h1M372 249h1M552 249h1M373 250h1M551 250h1M374 251h1M549 251h2M375 252h2M548 252h1M377 253h1M547 253h1M378 254h1M546 254h1M379 255h1M545 255h1M380 256h1M544 256h1M381 257h1M543 257h1M382 258h2M542 258h1M384 259h1M541 259h1M385 260h1M539 260h2M386 261h1M538 261h1M387 262h2M537 262h1M389 263h1M536 263h1M390 264h1M535 264h1M391 265h1M533 265h2M392 266h2M532 266h1M394 267h1M530 267h2M395 268h1M529 268h1M396 269h2M528 269h1M398 270h1M526 270h2M399 271h1M525 271h1M400 272h2M523 272h2M402 273h1M522 273h1M403 274h1M520 274h2M404 275h2M519 275h1M406 276h1M518 276h1M407 277h2M516 277h2M409 278h1M515 278h1M410 279h2M513 279h2M412 280h2M511 280h2M414 281h2M509 281h2M416 282h2M507 282h2M418 283h2M505 283h2M420 284h2M503 284h2M422 285h2M501 285h2M424 286h2M499 286h2M426 287h2M497 287h2M428 288h2M495 288h2M430 289h3M491 289h4M433 290h4M488 290h3M437 291h3M485 291h3M440 292h3M482 292h3M443 293h4M479 293h3M447 294h6M472 294h7M453 295h19" stroke="#ff48c0" stroke-width="1" fill="none" transform="translate(0,0.5)"/>
<path d="M211 140h20M205 141h6M231 141h6M202 142h3M237 142h3M199 143h3M240 143h4M196 144h3M244 144h3M192 145h4M247 145h3M189 146h3M250 146h4M186 147h3M254 147h2M184 148h2M256 148h2M182 149h2M258 149h2M180 150h2M260 150h2M178 151h2M262 151h2M177 152h1M264 152h1M175 153h2M265 153h2M174 154h1M267 154h2M172 155h2M269 155h1M171 156h1M270 156h2M169 157h2M272 157h2M168 158h1M274 158h1M166 159h2M275 159h2M165 160h1M277 160h1M163 161h2M278 161h1M162 162h1M279 162h2M161 163h1M281 163h1M159 164h2M282 164h2M158 165h1M284 165h1M157 166h1M285 166h1M155 167h2M286 167h1M154 168h1M287 168h1M153 169h1M288 169h2M152 170h1M290 170h1M150 171h2M291 171h1M149 172h1M292 172h1M148 173h1M293 173h1M147 174h1M294 174h1M146 175h1M295 175h2M145 176h1M297 176h1M143 177h2M298 177h1M142 178h1M299 178h1M141 179h1M300 179h2M140 180h1M302 180h1M139 181h1M303 181h1M138 182h1M304 182h1M137 183h1M305 183h1M136 184h1M306 184h1M134 185h2M307 185h1M133 186h1M308 186h2M132 187h1M310 187h1M131 188h1M311 188h1M130 189h1M312 189h1M129 190h1M313 190h1M128 191h1M314 191h1M127 192h1M315 192h1M126 193h1M316 193h1M124 194h2M317 194h1M123 195h1M318 195h1M122 196h1M319 196h1M121 197h1M320 197h1M120 198h1M321 198h1M119 199h1M322 199h1M118 200h1M323 200h1M117 201h1M324 201h1M116 202h1M325 202h1M115 203h1M326 203h1M115 204h1M327 204h1M114 205h1M328 205h1M113 206h1M329 206h1M112 207h1M330 207h1M111 208h1M331 208h1M110 209h1M332 209h1M109 210h1M333 210h1M108 211h1M334 211h1M107 212h1M335 212h1M106 213h1M336 213h1M105 214h1M337 214h1M104 215h1M338 215h1M103 216h1M339 216h1M102 217h1M340 217h1M101 218h1M341 218h1M100 219h1M342 219h1M343 220h1M344 221h1M345 222h1M346 223h1M347 224h1M347 225h1M348 226h1M349 227h1M350 228h1M351 229h1M573 229h1M352 230h1M572 230h1M353 231h1M571 231h1M354 232h1M570 232h1M355 233h1M569 233h1M356 234h1M569 234h1M357 235h1M568 235h1M358 236h1M567 236h1M359 237h1M566 237h1M360 238h1M565 238h1M361 239h1M564 239h1M362 240h1M563 240h1M363 241h1M562 241h1M364 242h1M561 242h1M365 243h1M559 243h2M366 244h1M558 244h1M367 245h1M557 245h1M368 246h1M556 246h1M369 247h1M555 247h1M370 248h1M554 248h1M371 249h1M553 249h1M372 250h1M552 250h1M373 251h1M551 251h1M374 252h1M549 252h2M375 253h2M548 253h1M377 254h1M547 254h1M378 255h1M546 255h1M379 256h1M545 256h1M380 257h1M544 257h1M381 258h1M543 258h1M382 259h2M542 259h1M384 260h1M541 260h1M385 261h1M539 261h2M386 262h1M538 262h1M387 263h2M537 263h1M389 264h1M536 264h1M390 265h1M535 265h1M391 266h1M534 266h1M392 267h1M532 267h2M393 268h1M531 268h1M394 269h2M530 269h1M396 270h1M529 270h1M397 271h1M527 271h2M398 272h1M526 272h1M399 273h1M525 273h1M400 274h2M523 274h2M402 275h1M522 275h1M403 276h1M520 276h2M404 277h2M519 277h1M406 278h1M518 278h1M407 279h2M516 279h2M409 280h1M515 280h1M410 281h2M513 281h2M412 282h2M512 282h1M414 283h1M510 283h2M415 284h2M509 284h1M417 285h2M507 285h2M419 286h1M505 286h2M420 287h2M503 287h2M422 288h2M501 288h2M424 289h2M499 289h2M426 290h2M497 290h2M428 291h2M495 291h2M430 292h3M491 292h4M433 293h4M488 293h3M437 294h3M485 294h3M440 295h3M482 295h3M443 296h4M479 296h3M447 297h6M472 297h7M453 298h19" stroke="#ff4040" stroke-width="1" fill="none" transform="translate(0,0.5)"/>
<path d="M214 129h15M209 130h5M229 130h4M204 131h5M233 131h5M200 132h4M238 132h5M196 133h4M243 133h3M194 134h2M246 134h2M192 135h2M248 135h2M190 136h2M250 136h2M188 137h2M252 137h2M186 138h2M254 138h2M184 139h2M256 139h2M182 140h2M258 140h2M180 141h2M260 141h2M178 142h2M262 142h2M177 143h1M264 143h1M176 144h1M265 144h2M174 145h2M267 145h1M173 146h1M268 146h1M172 147h1M269 147h2M170 148h2M271 148h1M169 149h1M272 149h2M168 150h1M274 150h1M166 151h2M275 151h2M165 152h1M277 152h1M163 153h2M278 153h1M162 154h1M279 154h2M161 155h1M281 155h1M159 156h2M282 156h2M158 157h1M284 157h1M157 158h1M285 158h1M156 159h1M286 159h1M155 160h1M287 160h1M153 161h2M288 161h1M152 162h1M289 162h1M151 163h1M290 163h1M150 164h1M291 164h1M149 165h1M292 165h1M148 166h1M293 166h1M147 167h1M294 167h1M146 168h1M295 168h1M145 169h1M296 169h1M144 170h1M297 170h1M144 171h1M298 171h1M143 172h1M299 172h1M142 173h1M300 173h1M141 174h1M301 174h1M140 175h1M302 175h1M139 176h1M303 176h1M138 177h1M304 177h1M137 178h1M305 178h1M136 179h1M306 179h1M135 180h1M307 180h1M134 181h1M308 181h1M133 182h1M309 182h1M132 183h1M310 183h1M131 184h1M311 184h1M130 185h1M312 185h1M129 186h1M313 186h1M128 187h1M314 187h1M127 188h1M315 188h1M126 189h1M315 189h1M125 190h1M316 190h1M124 191h1M317 191h1M124 192h1M318 192h1M123 193h1M319 193h1M122 194h1M320 194h1M121 195h1M320 195h1M120 196h1M321 196h1M119 197h1M322 197h1M118 198h1M323 198h1M117 199h1M324 199h1M117 200h1M325 200h1M116 201h1M326 201h1M115 202h1M327 202h1M114 203h1M327 203h1M113 204h1M328 204h1M112 205h1M329 205h1M112 206h1M330 206h1M111 207h1M331 207h1M110 208h1M332 208h1M109 209h1M333 209h1M108 210h1M334 210h1M107 211h1M335 211h1M106 212h1M336 212h1M105 213h1M337 213h1M105 214h1M337 214h1M104 215h1M338 215h1M103 216h1M339 216h1M102 217h1M340 217h1M101 218h1M341 218h1M100 219h1M342 219h1M343 220h1M344 221h1M344 222h1M345 223h1M346 224h1M347 225h1M348 226h1M349 227h1M349 228h1M350 229h1M351 230h1M573 230h1M352 231h1M572 231h1M353 232h1M571 232h1M354 233h1M571 233h1M355 234h1M570 234h1M356 235h1M569 235h1M356 236h1M568 236h1M357 237h1M567 237h1M358 238h1M566 238h1M359 239h1M566 239h1M360 240h1M565 240h1M361 241h1M564 241h1M362 242h1M563 242h1M363 243h1M562 243h1M363 244h1M561 244h1M364 245h1M560 245h1M365 246h1M559 246h1M366 247h1M559 247h1M367 248h1M558 248h1M368 249h1M557 249h1M368 250h1M556 250h1M369 251h1M555 251h1M370 252h1M554 252h1M371 253h1M553 253h1M372 254h1M552 254h1M373 255h1M551 255h1M374 256h1M550 256h1M375 257h1M549 257h1M376 258h1M548 258h1M377 259h1M547 259h1M378 260h1M546 260h1M379 261h1M545 261h1M380 262h1M544 262h1M381 263h1M543 263h1M382 264h1M542 264h1M383 265h1M541 265h1M384 266h1M540 266h1M385 267h1M540 267h1M386 268h1M539 268h1M387 269h1M538 269h1M388 270h1M537 270h1M389 271h1M536 271h1M390 272h1M535 272h1M391 273h1M534 273h1M392 274h1M533 274h1M393 275h1M532 275h1M394 276h1M530 276h2M395 277h1M529 277h1M396 278h1M528 278h1M397 279h1M527 279h1M398 280h1M526 280h1M399 281h1M525 281h1M400 282h2M523 282h2M402 283h1M522 283h1M403 284h1M520 284h2M404 285h2M519 285h1M406 286h1M518 286h1M407 287h2M516 287h2M409 288h1M515 288h1M410 289h2M514 289h1M412 290h1M512 290h2M413 291h1M511 291h1M414 292h2M510 292h1M416 293h1M508 293h2M417 294h2M507 294h1M419 295h1M505 295h2M420 296h2M503 296h2M422 297h2M501 297h2M424 298h2M499 298h2M426 299h2M497 299h2M428 300h1M495 300h2M429 301h2M493 301h2M431 302h2M491 302h2M433 303h2M489 303h2M435 304h2M487 304h2M437 305h4M484 305h3M441 306h5M480 306h4M446 307h5M475 307h5M451 308h4M470 308h5M455 309h15" stroke="#10ff10" stroke-width="1" fill="none" transform="translate(0,0.5)"/>
<path d="M214 125h15M209 126h5M229 126h4M205 127h4M233 127h4M202 128h3M237 128h3M199 129h3M240 129h4M196 130h3M244 130h3M194 131h2M247 131h2M191 132h3M249 132h3M189 133h2M252 133h2M187 134h2M254 134h2M185 135h2M256 135h2M183 136h2M258 136h1M182 137h1M259 137h2M180 138h2M261 138h1M178 139h2M262 139h2M177 140h1M264 140h1M176 141h1M265 141h2M174 142h2M267 142h1M173 143h1M268 143h1M172 144h1M269 144h2M170 145h2M271 145h1M169 146h1M272 146h2M168 147h1M274 147h1M167 148h1M275 148h1M165 149h2M276 149h2M164 150h1M278 150h1M163 151h1M279 151h1M162 152h1M280 152h1M160 153h2M281 153h2M159 154h1M283 154h1M158 155h1M284 155h1M157 156h1M285 156h1M156 157h1M286 157h1M155 158h1M287 158h1M153 159h2M288 159h1M152 160h1M289 160h1M151 161h1M290 161h1M150 162h1M291 162h1M149 163h1M292 163h1M148 164h1M293 164h1M147 165h1M294 165h1M146 166h1M295 166h1M145 167h1M296 167h1M144 168h1M297 168h1M144 169h1M298 169h1M143 170h1M299 170h1M142 171h1M300 171h1M141 172h1M301 172h1M140 173h1M302 173h1M139 174h1M303 174h1M138 175h1M304 175h1M137 176h1M305 176h1M136 177h1M306 177h1M135 178h1M307 178h1M134 179h1M308 179h1M133 180h1M309 180h1M132 181h1M310 181h1M131 182h1M311 182h1M130 183h1M312 183h1M129 184h1M313 184h1M128 185h1M314 185h1M127 186h1M315 186h1M127 187h1M315 187h1M126 188h1M316 188h1M125 189h1M317 189h1M124 190h1M318 190h1M123 191h1M318 191h1M122 192h1M319 192h1M122 193h1M320 193h1M121 194h1M321 194h1M120 195h1M321 195h1M119 196h1M322 196h1M118 197h1M323 197h1M117 198h1M324 198h1M117 199h1M325 199h1M116 200h1M326 200h1M115 201h1M327 201h1M114 202h1M327 202h1M113 203h1M328 203h1M112 204h1M329 204h1M112 205h1M330 205h1M111 206h1M331 206h1M110 207h1M332 207h1M109 208h1M333 208h1M108 209h1M334 209h1M108 210h1M335 210h1M107 211h1M335 211h1M106 212h1M336 212h1M105 213h1M337 213h1M104 214h1M338 214h1M103 215h1M339 215h1M103 216h1M340 216h1M102 217h1M340 217h1M101 218h1M341 218h1M100 219h1M342 219h1M343 220h1M344 221h1M344 222h1M345 223h1M346 224h1M347 225h1M347 226h1M348 227h1M349 228h1M350 229h1M350 230h1M351 231h1M573 231h1M352 232h1M572 232h1M353 233h1M571 233h1M354 234h1M571 234h1M355 235h1M570 235h1M356 236h1M569 236h1M356 237h1M568 237h1M357 238h1M567 238h1M358 239h1M566 239h1M359 240h1M566 240h1M360 241h1M565 241h1M361 242h1M564 242h1M362 243h1M563 243h1M363 244h1M562 244h1M363 245h1M562 245h1M364 246h1M561 246h1M365 247h1M560 247h1M366 248h1M559 248h1M366 249h1M558 249h1M367 250h1M557 250h1M368 251h1M557 251h1M369 252h1M556 252h1M369 253h1M555 253h1M370 254h1M554 254h1M371 255h1M553 255h1M372 256h1M552 256h1M373 257h1M551 257h1M374 258h1M550 258h1M375 259h1M549 259h1M376 260h1M548 260h1M377 261h1M547 261h1M378 262h1M546 262h1M379 263h1M545 263h1M380 264h1M544 264h1M381 265h1M543 265h1M382 266h1M542 266h1M383 267h1M541 267h1M384 268h1M540 268h1M385 269h1M540 269h1M386 270h1M539 270h1M387 271h1M538 271h1M388 272h1M537 272h1M389 273h1M536 273h1M390 274h1M535 274h1M391 275h1M534 275h1M392 276h1M533 276h1M393 277h1M532 277h1M394 278h1M530 278h2M395 279h1M529 279h1M396 280h1M528 280h1M397 281h1M527 281h1M398 282h1M526 282h1M399 283h1M525 283h1M400 284h1M524 284h1M401 285h2M522 285h2M403 286h1M521 286h1M404 287h1M520 287h1M405 288h1M519 288h1M406 289h2M517 289h2M408 290h1M516 290h1M409 291h1M515 291h1M410 292h2M514 292h1M412 293h1M512 293h2M413 294h1M511 294h1M414 295h2M510 295h1M416 296h1M508 296h2M417 297h2M507 297h1M419 298h1M506 298h1M420 299h2M504 299h2M422 300h1M502 300h2M423 301h2M501 301h1M425 302h1M499 302h2M426 303h2M497 303h2M428 304h2M495 304h2M430 305h2M493 305h2M432 306h3M490 306h3M435 307h2M488 307h2M437 308h3M485 308h3M440 309h3M482 309h3M443 310h4M479 310h3M447 311h4M475 311h4M451 312h4M470 312h5M455 313h15" stroke="#c860ff" stroke-width="1" fill="none" transform="translate(0,0.5)"/>
<path d="M214 123h15M209 124h5M229 124h4M205 125h4M233 125h4M202 126h3M237 126h3M199 127h3M240 127h4M196 128h3M244 128h3M194 129h2M247 129h2M191 130h3M249 130h3M189 131h2M252 131h2M187 132h2M254 132h2M185 133h2M256 133h2M183 134h2M258 134h1M182 135h1M259 135h2M180 136h2M261 136h1M178 137h2M262 137h2M177 138h1M264 138h1M176 139h1M265 139h2M174 140h2M267 140h1M173 141h1M268 141h1M172 142h1M269 142h2M170 143h2M271 143h1M169 144h1M272 144h2M168 145h1M274 145h1M167 146h1M275 146h1M165 147h2M276 147h2M164 148h1M278 148h1M163 149h1M279 149h1M162 150h1M280 150h1M160 151h2M281 151h2M159 152h1M283 152h1M158 153h1M284 153h1M157 154h1M285 154h1M156 155h1M286 155h1M155 156h1M287 156h1M154 157h1M288 157h1M153 158h1M289 158h1M152 159h1M289 159h1M151 160h1M290 160h1M150 161h1M291 161h1M149 162h1M292 162h1M148 163h1M293 163h1M147 164h1M294 164h1M146 165h1M295 165h1M145 166h1M296 166h1M144 167h1M297 167h1M144 168h1M298 168h1M143 169h1M299 169h1M142 170h1M300 170h1M141 171h1M301 171h1M140 172h1M302 172h1M139 173h1M303 173h1M138 174h1M304 174h1M137 175h1M305 175h1M136 176h1M306 176h1M135 177h1M307 177h1M134 178h1M308 178h1M134 179h1M308 179h1M133 180h1M309 180h1M132 181h1M310 181h1M131 182h1M311 182h1M130 183h1M312 183h1M129 184h1M313 184h1M128 185h1M314 185h1M127 186h1M315 186h1M126 187h1M315 187h1M125 188h1M316 188h1M124 189h1M317 189h1M124 190h1M318 190h1M123 191h1M319 191h1M122 192h1M320 192h1M121 193h1M320 193h1M120 194h1M321 194h1M119 195h1M322 195h1M118 196h1M323 196h1M118 197h1M324 197h1M117 198h1M325 198h1M116 199h1M325 199h1M115 200h1M326 200h1M115 201h1M327 201h1M114 202h1M328 202h1M113 203h1M329 203h1M112 204h1M330 204h1M112 205h1M330 205h1M111 206h1M331 206h1M110 207h1M332 207h1M109 208h1M333 208h1M108 209h1M334 209h1M108 210h1M335 210h1M107 211h1M335 211h1M106 212h1M336 212h1M105 213h1M337 213h1M104 214h1M338 214h1M103 215h1M339 215h1M103 216h1M340 216h1M102 217h1M340 217h1M101 218h1M341 218h1M100 219h1M342 219h1M343 220h1M344 221h1M344 222h1M345 223h1M346 224h1M347 225h1M347 226h1M348 227h1M349 228h1M350 229h1M350 230h1M351 231h1M573 231h1M352 232h1M572 232h1M353 233h1M572 233h1M354 234h1M571 234h1M354 235h1M570 235h1M355 236h1M569 236h1M356 237h1M569 237h1M357 238h1M568 238h1M358 239h1M567 239h1M359 240h1M566 240h1M359 241h1M566 241h1M360 242h1M565 242h1M361 243h1M564 243h1M362 244h1M563 244h1M363 245h1M562 245h1M363 246h1M561 246h1M364 247h1M560 247h1M365 248h1M559 248h1M366 249h1M559 249h1M367 250h1M558 250h1M368 251h1M557 251h1M368 252h1M556 252h1M369 253h1M555 253h1M370 254h1M554 254h1M371 255h1M553 255h1M372 256h1M552 256h1M373 257h1M551 257h1M374 258h1M550 258h1M375 259h1M549 259h1M375 260h1M549 260h1M376 261h1M548 261h1M377 262h1M547 262h1M378 263h1M546 263h1M379 264h1M545 264h1M380 265h1M544 265h1M381 266h1M543 266h1M382 267h1M542 267h1M383 268h1M541 268h1M384 269h1M540 269h1M385 270h1M540 270h1M386 271h1M539 271h1M387 272h1M538 272h1M388 273h1M537 273h1M389 274h1M536 274h1M390 275h1M535 275h1M391 276h1M534 276h1M392 277h1M533 277h1M393 278h1M532 278h1M394 279h1M531 279h1M395 280h1M530 280h1M395 281h1M529 281h1M396 282h1M528 282h1M397 283h1M527 283h1M398 284h1M526 284h1M399 285h1M525 285h1M400 286h1M524 286h1M401 287h2M522 287h2M403 288h1M521 288h1M404 289h1M520 289h1M405 290h1M519 290h1M406 291h2M517 291h2M408 292h1M516 292h1M409 293h1M515 293h1M410 294h2M514 294h1M412 295h1M512 295h2M413 296h1M511 296h1M414 297h2M510 297h1M416 298h1M508 298h2M417 299h2M507 299h1M419 300h1M506 300h1M420 301h2M504 301h2M422 302h1M502 302h2M423 303h2M501 303h1M425 304h1M499 304h2M426 305h2M497 305h2M428 306h2M495 306h2M430 307h2M493 307h2M432 308h3M490 308h3M435 309h2M488 309h2M437 310h3M485 310h3M440 311h3M482 311h3M443 312h4M479 312h3M447 313h4M475 313h4M451 314h4M470 314h5M455 315h15" stroke="#4040ff" stroke-width="1" fill="none" transform="translate(0,0.5)"/>
<path d="M214 114h15M209 115h5M229 115h4M205 116h4M233 116h4M202 117h3M237 117h3M199 118h3M240 118h4M196 119h3M244 119h2M194 120h2M246 120h2M192 121h2M248 121h2M190 122h2M250 122h2M188 123h2M252 123h2M187 124h1M254 124h2M185 125h2M256 125h2M183 126h2M258 126h1M182 127h1M259 127h2M180 128h2M261 128h1M178 129h2M262 129h2M177 130h1M264 130h1M176 131h1M265 131h1M175 132h1M266 132h2M174 133h1M268 133h1M172 134h2M269 134h1M171 135h1M270 135h1M170 136h1M271 136h2M169 137h1M273 137h1M168 138h1M274 138h1M167 139h1M275 139h1M166 140h1M276 140h1M165 141h1M277 141h1M163 142h2M278 142h1M162 143h1M279 143h2M161 144h1M281 144h1M160 145h1M282 145h1M159 146h1M283 146h1M158 147h1M284 147h1M157 148h1M285 148h1M156 149h1M286 149h1M155 150h1M287 150h1M154 151h1M288 151h1M153 152h1M289 152h1M152 153h1M289 153h1M151 154h1M290 154h1M150 155h1M291 155h1M149 156h1M292 156h1M148 157h1M293 157h1M147 158h1M294 158h1M146 159h1M295 159h1M146 160h1M296 160h1M145 161h1M297 161h1M144 162h1M298 162h1M143 163h1M298 163h1M142 164h1M299 164h1M141 165h1M300 165h1M141 166h1M301 166h1M140 167h1M302 167h1M139 168h1M303 168h1M138 169h1M304 169h1M137 170h1M305 170h1M137 171h1M306 171h1M136 172h1M306 172h1M135 173h1M307 173h1M134 174h1M308 174h1M133 175h1M309 175h1M132 176h1M310 176h1M132 177h1M311 177h1M131 178h1M311 178h1M130 179h1M312 179h1M129 180h1M313 180h1M128 181h1M314 181h1M127 182h1M314 182h1M127 183h1M315 183h1M126 184h1M316 184h1M125 185h1M316 185h1M124 186h1M317 186h1M124 187h1M318 187h1M123 188h1M319 188h1M122 189h1M319 189h1M121 190h1M320 190h1M121 191h1M321 191h1M120 192h1M321 192h1M119 193h1M322 193h1M118 194h1M323 194h1M118 195h1M324 195h1M117 196h1M324 196h1M116 197h1M325 197h1M116 198h1M326 198h1M115 199h1M327 199h1M114 200h1M327 200h1M113 201h1M328 201h1M113 202h1M329 202h1M112 203h1M330 203h1M111 204h1M330 204h1M111 205h1M331 205h1M110 206h1M332 206h1M109 207h1M333 207h1M108 208h1M334 208h1M108 209h1M334 209h1M107 210h1M335 210h1M106 211h1M336 211h1M105 212h1M337 212h1M105 213h1M337 213h1M104 214h1M338 214h1M103 215h1M339 215h1M102 216h1M340 216h1M102 217h1M340 217h1M101 218h1M341 218h1M100 219h1M342 219h1M343 220h1M343 221h1M344 222h1M345 223h1M345 224h1M346 225h1M347 226h1M348 227h1M348 228h1M349 229h1M350 230h1M350 231h1M351 232h1M573 232h1M352 233h1M572 233h1M353 234h1M572 234h1M353 235h1M571 235h1M354 236h1M570 236h1M355 237h1M570 237h1M356 238h1M569 238h1M356 239h1M568 239h1M357 240h1M567 240h1M358 241h1M567 241h1M359 242h1M566 242h1M359 243h1M565 243h1M360 244h1M565 244h1M361 245h1M564 245h1M362 246h1M563 246h1M362 247h1M562 247h1M363 248h1M562 248h1M364 249h1M561 249h1M364 250h1M560 250h1M365 251h1M559 251h1M366 252h1M559 252h1M367 253h1M558 253h1M367 254h1M557 254h1M368 255h1M556 255h1M369 256h1M556 256h1M369 257h1M555 257h1M370 258h1M554 258h1M371 259h1M553 259h1M372 260h1M552 260h1M373 261h1M552 261h1M373 262h1M551 262h1M374 263h1M550 263h1M375 264h1M549 264h1M376 265h1M548 265h1M377 266h1M547 266h1M378 267h1M547 267h1M378 268h1M546 268h1M379 269h1M545 269h1M380 270h1M544 270h1M381 271h1M543 271h1M382 272h1M542 272h1M383 273h1M542 273h1M384 274h1M541 274h1M385 275h1M540 275h1M385 276h1M539 276h1M386 277h1M538 277h1M387 278h1M537 278h1M388 279h1M537 279h1M389 280h1M536 280h1M390 281h1M535 281h1M391 282h1M534 282h1M392 283h1M533 283h1M393 284h1M532 284h1M394 285h1M531 285h1M395 286h1M530 286h1M395 287h1M529 287h1M396 288h1M528 288h1M397 289h1M527 289h1M398 290h1M526 290h1M399 291h1M525 291h1M400 292h1M524 292h1M401 293h1M523 293h1M402 294h1M522 294h1M403 295h1M520 295h2M404 296h2M519 296h1M406 297h1M518 297h1M407 298h1M517 298h1M408 299h1M516 299h1M409 300h1M515 300h1M410 301h1M514 301h1M411 302h2M513 302h1M413 303h1M512 303h1M414 304h1M510 304h2M415 305h1M509 305h1M416 306h2M508 306h1M418 307h1M507 307h1M419 308h1M506 308h1M420 309h2M504 309h2M422 310h1M502 310h2M423 311h2M501 311h1M425 312h1M499 312h2M426 313h2M497 313h2M428 314h1M495 314h2M429 315h2M493 315h2M431 316h2M491 316h2M433 317h2M489 317h2M435 318h2M487 318h2M437 319h3M485 319h2M440 320h3M482 320h3M443 321h4M479 321h3M447 322h4M475 322h4M451 323h4M470 323h5M455 324h15" stroke="#e8ff70" stroke-width="1" fill="none" transform="translate(0,0.5)"/>
<path d="M214 89h15M209 90h5M229 90h4M205 91h4M233 91h4M203 92h2M237 92h2M201 93h2M239 93h3M199 94h2M242 94h2M197 95h2M244 95h2M195 96h2M246 96h2M193 97h2M248 97h2M192 98h1M250 98h1M190 99h2M251 99h2M188 100h2M253 100h2M187 101h1M255 101h1M186 102h1M256 102h1M184 103h2M257 103h1M183 104h1M258 104h1M182 105h1M259 105h2M181 106h1M261 106h1M179 107h2M262 107h1M178 108h1M263 108h1M177 109h1M264 109h1M176 110h1M265 110h1M175 111h1M266 111h1M174 112h1M267 112h1M173 113h1M268 113h1M173 114h1M269 114h1M172 115h1M270 115h1M171 116h1M271 116h1M170 117h1M272 117h1M169 118h1M273 118h1M168 119h1M274 119h1M167 120h1M275 120h1M166 121h1M276 121h1M165 122h1M277 122h1M164 123h1M278 123h1M163 124h1M279 124h1M163 125h1M279 125h1M162 126h1M280 126h1M161 127h1M281 127h1M160 128h1M282 128h1M159 129h1M283 129h1M158 130h1M284 130h1M157 131h1M285 131h1M156 132h1M285 132h1M156 133h1M286 133h1M155 134h1M287 134h1M154 135h1M287 135h1M153 136h1M288 136h1M153 137h1M289 137h1M152 138h1M290 138h1M151 139h1M290 139h1M150 140h1M291 140h1M150 141h1M292 141h1M149 142h1M292 142h1M148 143h1M293 143h1M147 144h1M294 144h1M147 145h1M295 145h1M146 146h1M295 146h1M145 147h1M296 147h1M145 148h1M297 148h1M144 149h1M298 149h1M143 150h1M298 150h1M142 151h1M299 151h1M142 152h1M300 152h1M141 153h1M301 153h1M140 154h1M301 154h1M140 155h1M302 155h1M139 156h1M303 156h1M138 157h1M304 157h1M138 158h1M304 158h1M137 159h1M305 159h1M136 160h1M306 160h1M136 161h1M306 161h1M135 162h1M307 162h1M134 163h1M308 163h1M134 164h1M308 164h1M133 165h1M309 165h1M132 166h1M310 166h1M132 167h1M310 167h1M131 168h1M311 168h1M130 169h1M312 169h1M130 170h1M312 170h1M129 171h1M313 171h1M128 172h1M314 172h1M128 173h1M314 173h1M127 174h1M315 174h1M127 175h1M315 175h1M126 176h1M316 176h1M125 177h1M316 177h1M125 178h1M317 178h1M124 179h1M318 179h1M123 180h1M318 180h1M123 181h1M319 181h1M122 182h1M319 182h1M122 183h1M320 183h1M121 184h1M320 184h1M120 185h1M321 185h1M120 186h1M321 186h1M119 187h1M322 187h1M118 188h1M323 188h1M118 189h1M323 189h1M117 190h1M324 190h1M117 191h1M325 191h1M116 192h1M325 192h1M116 193h1M326 193h1M115 194h1M326 194h1M115 195h1M327 195h1M114 196h1M328 196h1M113 197h1M328 197h1M113 198h1M329 198h1M112 199h1M330 199h1M112 200h1M330 200h1M111 201h1M331 201h1M111 202h1M331 202h1M110 203h1M332 203h1M109 204h1M333 204h1M109 205h1M333 205h1M108 206h1M334 206h1M108 207h1M335 207h1M107 208h1M335 208h1M106 209h1M336 209h1M106 210h1M336 210h1M105 211h1M337 211h1M104 212h1M338 212h1M104 213h1M338 213h1M103 214h1M339 214h1M103 215h1M340 215h1M102 216h1M340 216h1M101 217h1M341 217h1M101 218h1M341 218h1M100 219h1M342 219h1M343 220h1M343 221h1M344 222h1M344 223h1M345 224h1M345 225h1M346 226h1M347 227h1M347 228h1M348 229h1M348 230h1M349 231h1M349 232h1M350 233h1M350 234h1M351 235h1M573 235h1M352 236h1M572 236h1M352 237h1M572 237h1M353 238h1M571 238h1M354 239h1M571 239h1M354 240h1M570 240h1M355 241h1M570 241h1M355 242h1M569 242h1M356 243h1M569 243h1M357 244h1M568 244h1M357 245h1M567 245h1M358 246h1M567 246h1M359 247h1M566 247h1M359 248h1M566 248h1M360 249h1M565 249h1M360 250h1M565 250h1M361 251h1M564 251h1M362 252h1M563 252h1M362 253h1M563 253h1M363 254h1M562 254h1M363 255h1M562 255h1M364 256h1M561 256h1M364 257h1M560 257h1M365 258h1M560 258h1M366 259h1M559 259h1M366 260h1M558 260h1M367 261h1M558 261h1M367 262h1M557 262h1M368 263h1M557 263h1M368 264h1M556 264h1M369 265h1M555 265h1M369 266h1M555 266h1M370 267h1M554 267h1M371 268h1M553 268h1M371 269h1M553 269h1M372 270h1M552 270h1M373 271h1M551 271h1M373 272h1M551 272h1M374 273h1M550 273h1M375 274h1M549 274h1M375 275h1M549 275h1M376 276h1M548 276h1M377 277h1M547 277h1M377 278h1M547 278h1M378 279h1M546 279h1M379 280h1M545 280h1M379 281h1M545 281h1M380 282h1M544 282h1M381 283h1M543 283h1M382 284h1M543 284h1M382 285h1M542 285h1M383 286h1M541 286h1M384 287h1M541 287h1M385 288h1M540 288h1M385 289h1M539 289h1M386 290h1M538 290h1M387 291h1M538 291h1M388 292h1M537 292h1M388 293h1M536 293h1M389 294h1M536 294h1M390 295h1M535 295h1M391 296h1M534 296h1M391 297h1M533 297h1M392 298h1M533 298h1M393 299h1M532 299h1M393 300h1M531 300h1M394 301h1M530 301h1M395 302h1M530 302h1M396 303h1M529 303h1M396 304h1M528 304h1M397 305h1M527 305h1M398 306h1M527 306h1M398 307h1M526 307h1M399 308h1M525 308h1M400 309h1M524 309h1M401 310h1M523 310h1M402 311h1M522 311h1M403 312h1M521 312h1M404 313h1M520 313h1M404 314h1M520 314h1M405 315h1M519 315h1M406 316h1M518 316h1M407 317h1M517 317h1M408 318h1M516 318h1M409 319h1M515 319h1M410 320h1M514 320h1M411 321h1M513 321h1M412 322h1M512 322h1M413 323h1M511 323h1M414 324h1M511 324h1M415 325h1M510 325h1M416 326h1M509 326h1M417 327h1M508 327h1M418 328h1M507 328h1M419 329h1M506 329h1M420 330h1M505 330h1M421 331h1M503 331h2M422 332h1M502 332h1M423 333h2M501 333h1M425 334h1M500 334h1M426 335h1M498 335h2M427 336h1M497 336h1M428 337h1M496 337h1M429 338h2M494 338h2M431 339h2M492 339h2M433 340h1M491 340h1M434 341h2M489 341h2M436 342h2M487 342h2M438 343h2M485 343h2M440 344h2M483 344h2M442 345h3M481 345h2M445 346h2M479 346h2M447 347h4M475 347h4M451 348h4M470 348h5M455 349h15" stroke="#40ffff" stroke-width="1" fill="none" transform="translate(0,0.5)"/>
<path d="M214 84h15M209 85h5M229 85h4M206 86h3M233 86h3M204 87h2M236 87h2M202 88h2M238 88h2M200 89h2M240 89h2M198 90h2M242 90h2M197 91h1M244 91h2M195 92h2M246 92h2M193 93h2M248 93h2M192 94h1M250 94h1M190 95h2M251 95h2M188 96h2M253 96h2M187 97h1M255 97h1M186 98h1M256 98h1M184 99h2M257 99h1M183 100h1M258 100h1M182 101h1M259 101h2M181 102h1M261 102h1M179 103h2M262 103h1M178 104h1M263 104h1M177 105h1M264 105h1M176 106h1M265 106h1M175 107h1M266 107h1M174 108h1M267 108h1M173 109h1M268 109h1M173 110h1M269 110h1M172 111h1M270 111h1M171 112h1M271 112h1M170 113h1M272 113h1M169 114h1M273 114h1M168 115h1M274 115h1M167 116h1M275 116h1M166 117h1M276 117h1M166 118h1M277 118h1M165 119h1M277 119h1M164 120h1M278 120h1M163 121h1M279 121h1M162 122h1M280 122h1M161 123h1M281 123h1M161 124h1M282 124h1M160 125h1M282 125h1M159 126h1M283 126h1M158 127h1M284 127h1M157 128h1M285 128h1M156 129h1M285 129h1M156 130h1M286 130h1M155 131h1M287 131h1M154 132h1M287 132h1M153 133h1M288 133h1M153 134h1M289 134h1M152 135h1M290 135h1M151 136h1M290 136h1M150 137h1M291 137h1M150 138h1M292 138h1M149 139h1M292 139h1M148 140h1M293 140h1M147 141h1M294 141h1M147 142h1M294 142h1M146 143h1M295 143h1M145 144h1M296 144h1M145 145h1M297 145h1M144 146h1M297 146h1M144 147h1M298 147h1M143 148h1M299 148h1M142 149h1M299 149h1M142 150h1M300 150h1M141 151h1M301 151h1M140 152h1M302 152h1M140 153h1M302 153h1M139 154h1M303 154h1M138 155h1M304 155h1M138 156h1M304 156h1M137 157h1M305 157h1M136 158h1M306 158h1M136 159h1M306 159h1M135 160h1M307 160h1M134 161h1M308 161h1M134 162h1M308 162h1M133 163h1M309 163h1M132 164h1M310 164h1M132 165h1M310 165h1M131 166h1M311 166h1M130 167h1M312 167h1M130 168h1M312 168h1M129 169h1M313 169h1M128 170h1M314 170h1M128 171h1M314 171h1M127 172h1M315 172h1M127 173h1M315 173h1M126 174h1M316 174h1M125 175h1M316 175h1M125 176h1M317 176h1M124 177h1M318 177h1M123 178h1M318 178h1M123 179h1M319 179h1M122 180h1M319 180h1M122 181h1M320 181h1M121 182h1M320 182h1M120 183h1M321 183h1M120 184h1M321 184h1M119 185h1M322 185h1M118 186h1M323 186h1M118 187h1M323 187h1M117 188h1M324 188h1M117 189h1M324 189h1M116 190h1M325 190h1M116 191h1M326 191h1M115 192h1M326 192h1M115 193h1M327 193h1M114 194h1M327 194h1M114 195h1M328 195h1M113 196h1M328 196h1M113 197h1M329 197h1M112 198h1M330 198h1M112 199h1M330 199h1M111 200h1M331 200h1M111 201h1M331 201h1M110 202h1M332 202h1M109 203h1M333 203h1M109 204h1M333 204h1M108 205h1M334 205h1M108 206h1M334 206h1M107 207h1M335 207h1M106 208h1M336 208h1M106 209h1M336 209h1M105 210h1M337 210h1M105 211h1M337 211h1M104 212h1M338 212h1M104 213h1M338 213h1M103 214h1M339 214h1M102 215h1M340 215h1M102 216h1M340 216h1M101 217h1M341 217h1M101 218h1M341 218h1M100 219h1M342 219h1M343 220h1M343 221h1M344 222h1M344 223h1M345 224h1M345 225h1M346 226h1M346 227h1M347 228h1M347 229h1M348 230h1M348 231h1M349 232h1M349 233h1M350 234h1M350 235h1M351 236h1M573 236h1M352 237h1M572 237h1M352 238h1M572 238h1M353 239h1M571 239h1M353 240h1M571 240h1M354 241h1M570 241h1M355 242h1M570 242h1M355 243h1M569 243h1M356 244h1M569 244h1M356 245h1M568 245h1M357 246h1M568 246h1M357 247h1M567 247h1M358 248h1M567 248h1M359 249h1M566 249h1M359 250h1M566 250h1M360 251h1M565 251h1M360 252h1M565 252h1M361 253h1M564 253h1M362 254h1M563 254h1M362 255h1M563 255h1M363 256h1M562 256h1M363 257h1M562 257h1M364 258h1M561 258h1M364 259h1M560 259h1M365 260h1M560 260h1M366 261h1M559 261h1M366 262h1M558 262h1M367 263h1M558 263h1M367 264h1M557 264h1M368 265h1M557 265h1M368 266h1M556 266h1M369 267h1M555 267h1M369 268h1M555 268h1M370 269h1M554 269h1M371 270h1M553 270h1M371 271h1M553 271h1M372 272h1M552 272h1M373 273h1M551 273h1M373 274h1M551 274h1M374 275h1M550 275h1M375 276h1M549 276h1M375 277h1M549 277h1M376 278h1M548 278h1M377 279h1M547 279h1M377 280h1M547 280h1M378 281h1M546 281h1M379 282h1M545 282h1M379 283h1M545 283h1M380 284h1M544 284h1M381 285h1M543 285h1M381 286h1M543 286h1M382 287h1M542 287h1M383 288h1M541 288h1M384 289h1M541 289h1M384 290h1M540 290h1M385 291h1M540 291h1M386 292h1M539 292h1M386 293h1M538 293h1M387 294h1M538 294h1M388 295h1M537 295h1M389 296h1M536 296h1M389 297h1M536 297h1M390 298h1M535 298h1M391 299h1M534 299h1M391 300h1M533 300h1M392 301h1M533 301h1M393 302h1M532 302h1M393 303h1M531 303h1M394 304h1M530 304h1M395 305h1M530 305h1M396 306h1M529 306h1M396 307h1M528 307h1M397 308h1M527 308h1M398 309h1M527 309h1M398 310h1M526 310h1M399 311h1M525 311h1M400 312h1M524 312h1M401 313h1M523 313h1M402 314h1M523 314h1M402 315h1M522 315h1M403 316h1M521 316h1M404 317h1M520 317h1M405 318h1M519 318h1M406 319h1M518 319h1M407 320h1M518 320h1M407 321h1M517 321h1M408 322h1M516 322h1M409 323h1M515 323h1M410 324h1M514 324h1M411 325h1M513 325h1M412 326h1M512 326h1M413 327h1M511 327h1M414 328h1M511 328h1M415 329h1M510 329h1M416 330h1M509 330h1M417 331h1M508 331h1M418 332h1M507 332h1M419 333h1M506 333h1M420 334h1M505 334h1M421 335h1M503 335h2M422 336h1M502 336h1M423 337h2M501 337h1M425 338h1M500 338h1M426 339h1M498 339h2M427 340h1M497 340h1M428 341h1M496 341h1M429 342h2M494 342h2M431 343h2M492 343h2M433 344h1M491 344h1M434 345h2M489 345h2M436 346h2M487 346h2M438 347h1M486 347h1M439 348h2M484 348h2M441 349h2M482 349h2M443 350h2M480 350h2M445 351h2M478 351h2M447 352h4M475 352h3M451 353h4M470 353h5M455 354h15" stroke="#40ffff" stroke-width="1" fill="none" transform="translate(0,0.5)"/>
<path d="M214 80h15M209 81h5M229 81h4M206 82h3M233 82h3M204 83h2M236 83h2M202 84h2M238 84h2M200 85h2M240 85h2M198 86h2M242 86h2M197 87h1M244 87h2M195 88h2M246 88h2M193 89h2M248 89h2M192 90h1M250 90h1M190 91h2M251 91h2M188 92h2M253 92h2M187 93h1M255 93h1M186 94h1M256 94h1M185 95h1M257 95h1M184 96h1M258 96h1M182 97h2M259 97h1M181 98h1M260 98h1M180 99h1M261 99h1M179 100h1M262 100h1M178 101h1M263 101h1M177 102h1M264 102h1M176 103h1M265 103h1M175 104h1M266 104h1M174 105h1M267 105h1M173 106h1M268 106h1M173 107h1M269 107h1M172 108h1M270 108h1M171 109h1M271 109h1M170 110h1M272 110h1M169 111h1M273 111h1M168 112h1M274 112h1M167 113h1M275 113h1M166 114h1M276 114h1M166 115h1M277 115h1M165 116h1M277 116h1M164 117h1M278 117h1M163 118h1M279 118h1M162 119h1M280 119h1M161 120h1M281 120h1M161 121h1M282 121h1M160 122h1M282 122h1M159 123h1M283 123h1M158 124h1M284 124h1M157 125h1M285 125h1M156 126h1M285 126h1M156 127h1M286 127h1M155 128h1M287 128h1M154 129h1M287 129h1M153 130h1M288 130h1M153 131h1M289 131h1M152 132h1M290 132h1M151 133h1M290 133h1M150 134h1M291 134h1M150 135h1M292 135h1M149 136h1M292 136h1M148 137h1M293 137h1M147 138h1M294 138h1M147 139h1M294 139h1M146 140h1M295 140h1M146 141h1M296 141h1M145 142h1M296 142h1M144 143h1M297 143h1M144 144h1M298 144h1M143 145h1M298 145h1M143 146h1M299 146h1M142 147h1M300 147h1M141 148h1M300 148h1M141 149h1M301 149h1M140 150h1M302 150h1M140 151h1M302 151h1M139 152h1M303 152h1M138 153h1M304 153h1M138 154h1M304 154h1M137 155h1M305 155h1M137 156h1M306 156h1M136 157h1M306 157h1M135 158h1M307 158h1M135 159h1M307 159h1M134 160h1M308 160h1M133 161h1M309 161h1M133 162h1M309 162h1M132 163h1M310 163h1M132 164h1M311 164h1M131 165h1M311 165h1M130 166h1M312 166h1M130 167h1M312 167h1M129 168h1M313 168h1M128 169h1M314 169h1M128 170h1M314 170h1M127 171h1M315 171h1M127 172h1M315 172h1M126 173h1M316 173h1M125 174h1M316 174h1M125 175h1M317 175h1M124 176h1M318 176h1M123 177h1M318 177h1M123 178h1M319 178h1M122 179h1M319 179h1M122 180h1M320 180h1M121 181h1M320 181h1M120 182h1M321 182h1M120 183h1M321 183h1M119 184h1M322 184h1M119 185h1M323 185h1M118 186h1M323 186h1M118 187h1M324 187h1M117 188h1M324 188h1M117 189h1M325 189h1M116 190h1M325 190h1M116 191h1M326 191h1M115 192h1M326 192h1M115 193h1M327 193h1M114 194h1M328 194h1M114 195h1M328 195h1M113 196h1M329 196h1M113 197h1M329 197h1M112 198h1M330 198h1M112 199h1M330 199h1M111 200h1M331 200h1M111 201h1M331 201h1M110 202h1M332 202h1M109 203h1M333 203h1M109 204h1M333 204h1M108 205h1M334 205h1M108 206h1M334 206h1M107 207h1M335 207h1M106 208h1M336 208h1M106 209h1M336 209h1M105 210h1M337 210h1M105 211h1M337 211h1M104 212h1M338 212h1M104 213h1M338 213h1M103 214h1M339 214h1M102 215h1M340 215h1M102 216h1M340 216h1M101 217h1M341 217h1M101 218h1M341 218h1M100 219h1M342 219h1M343 220h1M343 221h1M344 222h1M344 223h1M345 224h1M345 225h1M346 226h1M346 227h1M347 228h1M347 229h1M348 230h1M348 231h1M349 232h1M349 233h1M350 234h1M350 235h1M351 236h1M573 236h1M352 237h1M573 237h1M352 238h1M572 238h1M353 239h1M572 239h1M353 240h1M571 240h1M354 241h1M571 241h1M354 242h1M570 242h1M355 243h1M570 243h1M355 244h1M569 244h1M356 245h1M569 245h1M357 246h1M568 246h1M357 247h1M568 247h1M358 248h1M567 248h1M358 249h1M567 249h1M359 250h1M566 250h1M359 251h1M566 251h1M360 252h1M565 252h1M360 253h1M565 253h1M361 254h1M564 254h1M362 255h1M563 255h1M362 256h1M563 256h1M363 257h1M562 257h1M363 258h1M562 258h1M364 259h1M561 259h1M364 260h1M560 260h1M365 261h1M560 261h1M366 262h1M559 262h1M366 263h1M558 263h1M367 264h1M558 264h1M367 265h1M557 265h1M368 266h1M557 266h1M368 267h1M556 267h1M369 268h1M555 268h1M369 269h1M555 269h1M370 270h1M554 270h1M371 271h1M553 271h1M371 272h1M553 272h1M372 273h1M552 273h1M373 274h1M552 274h1M373 275h1M551 275h1M374 276h1M550 276h1M374 277h1M550 277h1M375 278h1M549 278h1M376 279h1M548 279h1M376 280h1M548 280h1M377 281h1M547 281h1M378 282h1M547 282h1M378 283h1M546 283h1M379 284h1M545 284h1M379 285h1M545 285h1M380 286h1M544 286h1M381 287h1M543 287h1M381 288h1M543 288h1M382 289h1M542 289h1M383 290h1M542 290h1M383 291h1M541 291h1M384 292h1M540 292h1M385 293h1M540 293h1M385 294h1M539 294h1M386 295h1M539 295h1M387 296h1M538 296h1M387 297h1M537 297h1M388 298h1M537 298h1M389 299h1M536 299h1M389 300h1M536 300h1M390 301h1M535 301h1M391 302h1M534 302h1M391 303h1M533 303h1M392 304h1M533 304h1M393 305h1M532 305h1M393 306h1M531 306h1M394 307h1M530 307h1M395 308h1M530 308h1M396 309h1M529 309h1M396 310h1M528 310h1M397 311h1M527 311h1M398 312h1M527 312h1M398 313h1M526 313h1M399 314h1M525 314h1M400 315h1M524 315h1M401 316h1M523 316h1M402 317h1M523 317h1M402 318h1M522 318h1M403 319h1M521 319h1M404 320h1M520 320h1M405 321h1M519 321h1M406 322h1M518 322h1M407 323h1M518 323h1M407 324h1M517 324h1M408 325h1M516 325h1M409 326h1M515 326h1M410 327h1M514 327h1M411 328h1M513 328h1M412 329h1M512 329h1M413 330h1M511 330h1M414 331h1M511 331h1M415 332h1M510 332h1M416 333h1M509 333h1M417 334h1M508 334h1M418 335h1M507 335h1M419 336h1M506 336h1M420 337h1M505 337h1M421 338h1M504 338h1M422 339h1M503 339h1M423 340h1M501 340h2M424 341h1M500 341h1M425 342h1M499 342h1M426 343h1M498 343h1M427 344h1M497 344h1M428 345h1M496 345h1M429 346h2M494 346h2M431 347h2M492 347h2M433 348h1M491 348h1M434 349h2M489 349h2M436 350h2M487 350h2M438 351h1M486 351h1M439 352h2M484 352h2M441 353h2M482 353h2M443 354h2M480 354h2M445 355h2M478 355h2M447 356h4M475 356h3M451 357h4M470 357h5M455 358h15" stroke="#40b8ff" stroke-width="1" fill="none" transform="translate(0,0.5)"/>
<path d="M215 72h13M211 73h4M228 73h3M208 74h3M231 74h3M205 75h3M234 75h3M203 76h2M237 76h2M201 77h2M239 77h3M199 78h2M242 78h2M197 79h2M244 79h2M195 80h2M246 80h2M194 81h1M248 81h1M192 82h2M249 82h1M191 83h1M250 83h2M190 84h1M252 84h1M188 85h2M253 85h2M187 86h1M255 86h1M186 87h1M256 87h1M185 88h1M257 88h1M184 89h1M258 89h1M182 90h2M259 90h1M181 91h1M260 91h1M180 92h1M261 92h1M179 93h1M262 93h1M178 94h1M263 94h1M177 95h1M264 95h1M176 96h1M265 96h1M175 97h1M266 97h1M175 98h1M267 98h1M174 99h1M268 99h1M173 100h1M269 100h1M172 101h1M269 101h1M171 102h1M270 102h1M170 103h1M271 103h1M170 104h1M272 104h1M169 105h1M273 105h1M168 106h1M274 106h1M167 107h1M275 107h1M166 108h1M276 108h1M166 109h1M277 109h1M165 110h1M277 110h1M164 111h1M278 111h1M163 112h1M279 112h1M162 113h1M280 113h1M161 114h1M281 114h1M161 115h1M282 115h1M160 116h1M282 116h1M159 117h1M283 117h1M158 118h1M284 118h1M157 119h1M285 119h1M157 120h1M285 120h1M156 121h1M286 121h1M155 122h1M286 122h1M155 123h1M287 123h1M154 124h1M288 124h1M153 125h1M288 125h1M153 126h1M289 126h1M152 127h1M289 127h1M151 128h1M290 128h1M151 129h1M291 129h1M150 130h1M291 130h1M149 131h1M292 131h1M149 132h1M292 132h1M148 133h1M293 133h1M147 134h1M294 134h1M147 135h1M294 135h1M146 136h1M295 136h1M146 137h1M296 137h1M145 138h1M296 138h1M144 139h1M297 139h1M144 140h1M298 140h1M143 141h1M298 141h1M143 142h1M299 142h1M142 143h1M300 143h1M141 144h1M300 144h1M141 145h1M301 145h1M140 146h1M302 146h1M140 147h1M302 147h1M139 148h1M303 148h1M138 149h1M304 149h1M138 150h1M304 150h1M137 151h1M305 151h1M137 152h1M305 152h1M136 153h1M306 153h1M135 154h1M307 154h1M135 155h1M307 155h1M134 156h1M308 156h1M134 157h1M308 157h1M133 158h1M309 158h1M133 159h1M309 159h1M132 160h1M310 160h1M131 161h1M311 161h1M131 162h1M311 162h1M130 163h1M312 163h1M130 164h1M312 164h1M129 165h1M313 165h1M128 166h1M314 166h1M128 167h1M314 167h1M127 168h1M315 168h1M127 169h1M315 169h1M126 170h1M316 170h1M125 171h1M316 171h1M125 172h1M317 172h1M124 173h1M317 173h1M124 174h1M318 174h1M123 175h1M318 175h1M123 176h1M319 176h1M122 177h1M319 177h1M121 178h1M320 178h1M121 179h1M320 179h1M120 180h1M321 180h1M120 181h1M321 181h1M119 182h1M322 182h1M119 183h1M323 183h1M118 184h1M323 184h1M118 185h1M324 185h1M117 186h1M324 186h1M117 187h1M325 187h1M116 188h1M325 188h1M116 189h1M326 189h1M115 190h1M326 190h1M115 191h1M327 191h1M114 192h1M327 192h1M114 193h1M328 193h1M113 194h1M328 194h1M113 195h1M329 195h1M112 196h1M329 196h1M112 197h1M330 197h1M111 198h1M330 198h1M111 199h1M331 199h1M110 200h1M331 200h1M110 201h1M332 201h1M109 202h1M333 202h1M109 203h1M333 203h1M108 204h1M334 204h1M108 205h1M334 205h1M107 206h1M335 206h1M107 207h1M335 207h1M106 208h1M336 208h1M106 209h1M336 209h1M105 210h1M337 210h1M104 211h1M338 211h1M104 212h1M338 212h1M103 213h1M339 213h1M103 214h1M339 214h1M102 215h1M340 215h1M102 216h1M340 216h1M101 217h1M341 217h1M101 218h1M341 218h1M100 219h1M342 219h1M343 220h1M343 221h1M344 222h1M344 223h1M345 224h1M345 225h1M346 226h1M346 227h1M347 228h1M347 229h1M348 230h1M348 231h1M349 232h1M349 233h1M350 234h1M350 235h1M351 236h1M351 237h1M573 237h1M352 238h1M573 238h1M352 239h1M572 239h1M353 240h1M572 240h1M353 241h1M571 241h1M354 242h1M571 242h1M354 243h1M570 243h1M355 244h1M570 244h1M355 245h1M569 245h1M356 246h1M569 246h1M356 247h1M568 247h1M357 248h1M568 248h1M357 249h1M567 249h1M358 250h1M567 250h1M358 251h1M566 251h1M359 252h1M566 252h1M359 253h1M565 253h1M360 254h1M565 254h1M360 255h1M564 255h1M361 256h1M564 256h1M362 257h1M563 257h1M362 258h1M563 258h1M363 259h1M562 259h1M363 260h1M562 260h1M364 261h1M561 261h1M364 262h1M560 262h1M365 263h1M560 263h1M365 264h1M559 264h1M366 265h1M559 265h1M366 266h1M558 266h1M367 267h1M558 267h1M367 268h1M557 268h1M368 269h1M556 269h1M368 270h1M556 270h1M369 271h1M555 271h1M369 272h1M555 272h1M370 273h1M554 273h1M371 274h1M553 274h1M371 275h1M553 275h1M372 276h1M552 276h1M372 277h1M552 277h1M373 278h1M551 278h1M374 279h1M550 279h1M374 280h1M550 280h1M375 281h1M549 281h1M375 282h1M549 282h1M376 283h1M548 283h1M376 284h1M548 284h1M377 285h1M547 285h1M378 286h1M546 286h1M378 287h1M546 287h1M379 288h1M545 288h1M379 289h1M545 289h1M380 290h1M544 290h1M381 291h1M543 291h1M381 292h1M543 292h1M382 293h1M542 293h1M383 294h1M542 294h1M383 295h1M541 295h1M384 296h1M540 296h1M385 297h1M540 297h1M385 298h1M539 298h1M386 299h1M539 299h1M387 300h1M538 300h1M387 301h1M537 301h1M388 302h1M537 302h1M389 303h1M536 303h1M389 304h1M536 304h1M390 305h1M535 305h1M391 306h1M534 306h1M391 307h1M534 307h1M392 308h1M533 308h1M392 309h1M532 309h1M393 310h1M532 310h1M394 311h1M531 311h1M394 312h1M530 312h1M395 313h1M530 313h1M395 314h1M529 314h1M396 315h1M528 315h1M397 316h1M528 316h1M397 317h1M527 317h1M398 318h1M526 318h1M398 319h1M526 319h1M399 320h1M525 320h1M400 321h1M524 321h1M401 322h1M523 322h1M402 323h1M523 323h1M402 324h1M522 324h1M403 325h1M521 325h1M404 326h1M520 326h1M405 327h1M519 327h1M406 328h1M518 328h1M407 329h1M518 329h1M407 330h1M517 330h1M408 331h1M516 331h1M409 332h1M515 332h1M410 333h1M514 333h1M411 334h1M513 334h1M412 335h1M513 335h1M413 336h1M512 336h1M414 337h1M511 337h1M414 338h1M510 338h1M415 339h1M509 339h1M416 340h1M508 340h1M417 341h1M508 341h1M418 342h1M507 342h1M419 343h1M506 343h1M420 344h1M505 344h1M421 345h1M504 345h1M422 346h1M503 346h1M423 347h1M501 347h2M424 348h1M500 348h1M425 349h1M499 349h1M426 350h1M498 350h1M427 351h1M497 351h1M428 352h1M496 352h1M429 353h2M494 353h2M431 354h1M493 354h1M432 355h1M491 355h2M433 356h2M490 356h1M435 357h1M489 357h1M436 358h2M487 358h2M438 359h2M485 359h2M440 360h2M483 360h2M442 361h3M481 361h2M445 362h2M479 362h2M447 363h3M476 363h3M450 364h3M472 364h4M453 365h3M469 365h3M456 366h13" stroke="#ff4040" stroke-width="1" fill="none" transform="translate(0,0.5)"/>
<path d="M215 58h13M211 59h4M228 59h3M208 60h3M231 60h3M206 61h2M234 61h2M204 62h2M236 62h2M202 63h2M238 63h2M200 64h2M240 64h2M198 65h2M242 65h2M197 66h1M244 66h2M195 67h2M246 67h2M194 68h1M248 68h1M192 69h2M249 69h1M191 70h1M250 70h2M190 71h1M252 71h1M188 72h2M253 72h2M187 73h1M255 73h1M186 74h1M256 74h1M185 75h1M257 75h1M184 76h1M258 76h1M183 77h1M259 77h1M182 78h1M260 78h1M181 79h1M260 79h1M180 80h1M261 80h1M179 81h1M262 81h1M178 82h1M263 82h1M177 83h1M264 83h1M176 84h1M265 84h1M176 85h1M266 85h1M175 86h1M267 86h1M174 87h1M267 87h1M173 88h1M268 88h1M173 89h1M269 89h1M172 90h1M270 90h1M171 91h1M271 91h1M170 92h1M272 92h1M170 93h1M272 93h1M169 94h1M273 94h1M168 95h1M274 95h1M167 96h1M275 96h1M167 97h1M275 97h1M166 98h1M276 98h1M165 99h1M277 99h1M164 100h1M278 100h1M164 101h1M278 101h1M163 102h1M279 102h1M162 103h1M280 103h1M162 104h1M280 104h1M161 105h1M281 105h1M160 106h1M282 106h1M159 107h1M283 107h1M159 108h1M283 108h1M158 109h1M284 109h1M157 110h1M285 110h1M157 111h1M285 111h1M156 112h1M286 112h1M155 113h1M286 113h1M155 114h1M287 114h1M154 115h1M288 115h1M153 116h1M288 116h1M153 117h1M289 117h1M152 118h1M289 118h1M151 119h1M290 119h1M151 120h1M291 120h1M150 121h1M291 121h1M149 122h1M292 122h1M149 123h1M292 123h1M148 124h1M293 124h1M147 125h1M294 125h1M147 126h1M294 126h1M146 127h1M295 127h1M146 128h1M295 128h1M145 129h1M296 129h1M145 130h1M297 130h1M144 131h1M297 131h1M144 132h1M298 132h1M143 133h1M298 133h1M143 134h1M299 134h1M142 135h1M299 135h1M142 136h1M300 136h1M141 137h1M301 137h1M141 138h1M301 138h1M140 139h1M302 139h1M140 140h1M302 140h1M139 141h1M303 141h1M138 142h1M304 142h1M138 143h1M304 143h1M137 144h1M305 144h1M137 145h1M305 145h1M136 146h1M306 146h1M136 147h1M306 147h1M135 148h1M307 148h1M135 149h1M307 149h1M134 150h1M308 150h1M134 151h1M308 151h1M133 152h1M309 152h1M133 153h1M309 153h1M132 154h1M310 154h1M132 155h1M310 155h1M131 156h1M311 156h1M131 157h1M311 157h1M130 158h1M312 158h1M130 159h1M312 159h1M129 160h1M313 160h1M128 161h1M313 161h1M128 162h1M314 162h1M127 163h1M314 163h1M127 164h1M315 164h1M126 165h1M315 165h1M126 166h1M316 166h1M125 167h1M316 167h1M125 168h1M317 168h1M124 169h1M317 169h1M124 170h1M318 170h1M123 171h1M318 171h1M123 172h1M319 172h1M122 173h1M319 173h1M122 174h1M320 174h1M121 175h1M320 175h1M121 176h1M321 176h1M120 177h1M321 177h1M120 178h1M322 178h1M119 179h1M322 179h1M119 180h1M323 180h1M118 181h1M323 181h1M118 182h1M324 182h1M117 183h1M324 183h1M117 184h1M325 184h1M116 185h1M325 185h1M116 186h1M326 186h1M115 187h1M326 187h1M115 188h1M327 188h1M115 189h1M327 189h1M114 190h1M328 190h1M114 191h1M328 191h1M113 192h1M329 192h1M113 193h1M329 193h1M112 194h1M330 194h1M112 195h1M330 195h1M111 196h1M331 196h1M111 197h1M331 197h1M110 198h1M332 198h1M110 199h1M332 199h1M110 200h1M333 200h1M109 201h1M333 201h1M109 202h1M334 202h1M108 203h1M334 203h1M108 204h1M335 204h1M107 205h1M335 205h1M107 206h1M336 206h1M106 207h1M336 207h1M106 208h1M337 208h1M105 209h1M337 209h1M105 210h1M338 210h1M104 211h1M338 211h1M104 212h1M339 212h1M103 213h1M339 213h1M103 214h1M340 214h1M102 215h1M340 215h1M102 216h1M341 216h1M101 217h1M341 217h1M101 218h1M342 218h1M100 219h1M342 219h1M342 220h1M343 221h1M343 222h1M344 223h1M344 224h1M345 225h1M345 226h1M346 227h1M346 228h1M347 229h1M347 230h1M347 231h1M348 232h1M348 233h1M349 234h1M349 235h1M350 236h1M350 237h1M351 238h1M351 239h1M573 239h1M352 240h1M573 240h1M352 241h1M572 241h1M353 242h1M572 242h1M353 243h1M571 243h1M354 244h1M571 244h1M354 245h1M570 245h1M355 246h1M570 246h1M355 247h1M569 247h1M356 248h1M569 248h1M356 249h1M569 249h1M357 250h1M568 250h1M357 251h1M568 251h1M358 252h1M567 252h1M358 253h1M567 253h1M359 254h1M566 254h1M359 255h1M566 255h1M360 256h1M565 256h1M360 257h1M565 257h1M361 258h1M564 258h1M361 259h1M564 259h1M361 260h1M563 260h1M362 261h1M563 261h1M362 262h1M562 262h1M363 263h1M562 263h1M363 264h1M561 264h1M364 265h1M561 265h1M364 266h1M560 266h1M365 267h1M560 267h1M365 268h1M559 268h1M366 269h1M559 269h1M366 270h1M558 270h1M367 271h1M558 271h1M367 272h1M557 272h1M368 273h1M557 273h1M368 274h1M556 274h1M369 275h1M556 275h1M369 276h1M555 276h1M370 277h1M555 277h1M370 278h1M554 278h1M371 279h1M553 279h1M371 280h1M553 280h1M372 281h1M552 281h1M372 282h1M552 282h1M373 283h1M551 283h1M373 284h1M551 284h1M374 285h1M550 285h1M374 286h1M550 286h1M375 287h1M549 287h1M375 288h1M549 288h1M376 289h1M548 289h1M376 290h1M548 290h1M377 291h1M547 291h1M377 292h1M547 292h1M378 293h1M546 293h1M378 294h1M546 294h1M379 295h1M545 295h1M379 296h1M545 296h1M380 297h1M544 297h1M381 298h1M543 298h1M381 299h1M543 299h1M382 300h1M542 300h1M382 301h1M542 301h1M383 302h1M541 302h1M384 303h1M541 303h1M384 304h1M540 304h1M385 305h1M540 305h1M385 306h1M539 306h1M386 307h1M539 307h1M386 308h1M538 308h1M387 309h1M538 309h1M388 310h1M537 310h1M388 311h1M537 311h1M389 312h1M536 312h1M389 313h1M536 313h1M390 314h1M535 314h1M391 315h1M534 315h1M391 316h1M534 316h1M392 317h1M533 317h1M392 318h1M532 318h1M393 319h1M532 319h1M394 320h1M531 320h1M394 321h1M530 321h1M395 322h1M530 322h1M395 323h1M529 323h1M396 324h1M528 324h1M397 325h1M528 325h1M397 326h1M527 326h1M398 327h1M526 327h1M398 328h1M526 328h1M399 329h1M525 329h1M400 330h1M524 330h1M400 331h1M524 331h1M401 332h1M523 332h1M402 333h1M522 333h1M403 334h1M521 334h1M403 335h1M521 335h1M404 336h1M520 336h1M405 337h1M519 337h1M405 338h1M519 338h1M406 339h1M518 339h1M407 340h1M517 340h1M408 341h1M516 341h1M408 342h1M516 342h1M409 343h1M515 343h1M410 344h1M514 344h1M411 345h1M514 345h1M412 346h1M513 346h1M412 347h1M512 347h1M413 348h1M511 348h1M414 349h1M511 349h1M415 350h1M510 350h1M416 351h1M509 351h1M417 352h1M508 352h1M417 353h1M508 353h1M418 354h1M507 354h1M419 355h1M506 355h1M420 356h1M505 356h1M421 357h1M504 357h1M422 358h1M503 358h1M423 359h1M502 359h1M424 360h1M501 360h1M424 361h1M500 361h1M425 362h1M499 362h1M426 363h1M498 363h1M427 364h1M497 364h1M428 365h1M496 365h1M429 366h2M494 366h2M431 367h1M493 367h1M432 368h1M491 368h2M433 369h2M490 369h1M435 370h1M489 370h1M436 371h2M487 371h2M438 372h1M486 372h1M439 373h2M484 373h2M441 374h2M482 374h2M443 375h2M480 375h2M445 376h2M478 376h2M447 377h3M476 377h2M450 378h3M472 378h4M453 379h3M469 379h3M456 380h13" stroke="#4040ff" stroke-width="1" fill="none" transform="translate(0,0.5)"/>
<path d="M215 46h13M211 47h4M228 47h3M208 48h3M231 48h3M206 49h2M234 49h2M204 50h2M236 50h2M202 51h2M238 51h2M200 52h2M240 52h2M198 53h2M242 53h2M197 54h1M244 54h2M196 55h1M246 55h1M194 56h2M247 56h2M193 57h1M249 57h1M192 58h1M250 58h1M191 59h1M251 59h1M189 60h2M252 60h2M188 61h1M254 61h1M187 62h1M255 62h1M186 63h1M256 63h1M185 64h1M257 64h1M184 65h1M257 65h1M183 66h1M258 66h1M182 67h1M259 67h1M182 68h1M260 68h1M181 69h1M261 69h1M180 70h1M262 70h1M179 71h1M262 71h1M178 72h1M263 72h1M177 73h1M264 73h1M176 74h1M265 74h1M176 75h1M266 75h1M175 76h1M266 76h1M174 77h1M267 77h1M174 78h1M268 78h1M173 79h1M269 79h1M172 80h1M269 80h1M171 81h1M270 81h1M171 82h1M271 82h1M170 83h1M272 83h1M169 84h1M272 84h1M169 85h1M273 85h1M168 86h1M274 86h1M167 87h1M275 87h1M167 88h1M275 88h1M166 89h1M276 89h1M165 90h1M277 90h1M165 91h1M277 91h1M164 92h1M278 92h1M163 93h1M279 93h1M163 94h1M279 94h1M162 95h1M280 95h1M161 96h1M281 96h1M161 97h1M281 97h1M160 98h1M282 98h1M159 99h1M283 99h1M159 100h1M283 100h1M158 101h1M284 101h1M157 102h1M285 102h1M157 103h1M285 103h1M156 104h1M286 104h1M156 105h1M286 105h1M155 106h1M287 106h1M154 107h1M287 107h1M154 108h1M288 108h1M153 109h1M289 109h1M152 110h1M289 110h1M152 111h1M290 111h1M151 112h1M290 112h1M151 113h1M291 113h1M150 114h1M291 114h1M149 115h1M292 115h1M149 116h1M292 116h1M148 117h1M293 117h1M148 118h1M294 118h1M147 119h1M294 119h1M147 120h1M295 120h1M146 121h1M295 121h1M146 122h1M296 122h1M145 123h1M296 123h1M145 124h1M297 124h1M144 125h1M297 125h1M144 126h1M298 126h1M143 127h1M298 127h1M143 128h1M299 128h1M142 129h1M299 129h1M142 130h1M300 130h1M141 131h1M300 131h1M141 132h1M301 132h1M140 133h1M301 133h1M140 134h1M302 134h1M139 135h1M302 135h1M139 136h1M303 136h1M138 137h1M304 137h1M138 138h1M304 138h1M137 139h1M305 139h1M137 140h1M305 140h1M136 141h1M306 141h1M136 142h1M306 142h1M135 143h1M307 143h1M135 144h1M307 144h1M134 145h1M308 145h1M134 146h1M308 146h1M133 147h1M309 147h1M133 148h1M309 148h1M132 149h1M310 149h1M132 150h1M310 150h1M131 151h1M311 151h1M131 152h1M311 152h1M130 153h1M312 153h1M130 154h1M312 154h1M129 155h1M313 155h1M129 156h1M313 156h1M128 157h1M314 157h1M128 158h1M314 158h1M127 159h1M315 159h1M127 160h1M315 160h1M126 161h1M316 161h1M126 162h1M316 162h1M125 163h1M316 163h1M125 164h1M317 164h1M124 165h1M317 165h1M124 166h1M318 166h1M123 167h1M318 167h1M123 168h1M319 168h1M122 169h1M319 169h1M122 170h1M319 170h1M121 171h1M320 171h1M121 172h1M320 172h1M120 173h1M321 173h1M120 174h1M321 174h1M119 175h1M322 175h1M119 176h1M322 176h1M119 177h1M322 177h1M118 178h1M323 178h1M118 179h1M323 179h1M117 180h1M324 180h1M117 181h1M324 181h1M116 182h1M325 182h1M116 183h1M325 183h1M116 184h1M326 184h1M115 185h1M326 185h1M115 186h1M327 186h1M114 187h1M327 187h1M114 188h1M328 188h1M113 189h1M328 189h1M113 190h1M329 190h1M113 191h1M329 191h1M112 192h1M330 192h1M112 193h1M330 193h1M111 194h1M331 194h1M111 195h1M331 195h1M110 196h1M332 196h1M110 197h1M332 197h1M110 198h1M332 198h1M109 199h1M333 199h1M109 200h1M333 200h1M108 201h1M334 201h1M108 202h1M334 202h1M107 203h1M335 203h1M107 204h1M335 204h1M106 205h1M336 205h1M106 206h1M336 206h1M105 207h1M337 207h1M105 208h1M337 208h1M105 209h1M337 209h1M104 210h1M338 210h1M104 211h1M338 211h1M103 212h1M339 212h1M103 213h1M339 213h1M102 214h1M340 214h1M102 215h1M340 215h1M101 216h1M341 216h1M101 217h1M341 217h1M100 218h1M342 218h1M100 219h1M342 219h1M342 220h1M343 221h1M343 222h1M344 223h1M344 224h1M344 225h1M345 226h1M345 227h1M346 228h1M346 229h1M347 230h1M347 231h1M347 232h1M348 233h1M348 234h1M349 235h1M349 236h1M349 237h1M350 238h1M350 239h1M351 240h1M351 241h1M573 241h1M351 242h1M573 242h1M352 243h1M572 243h1M352 244h1M572 244h1M353 245h1M571 245h1M353 246h1M571 246h1M354 247h1M570 247h1M354 248h1M570 248h1M355 249h1M570 249h1M355 250h1M569 250h1M356 251h1M569 251h1M356 252h1M568 252h1M357 253h1M568 253h1M357 254h1M567 254h1M358 255h1M567 255h1M358 256h1M567 256h1M359 257h1M566 257h1M359 258h1M566 258h1M360 259h1M565 259h1M360 260h1M565 260h1M361 261h1M564 261h1M361 262h1M564 262h1M361 263h1M564 263h1M362 264h1M563 264h1M362 265h1M563 265h1M363 266h1M562 266h1M363 267h1M562 267h1M364 268h1M561 268h1M364 269h1M561 269h1M364 270h1M560 270h1M365 271h1M560 271h1M365 272h1M559 272h1M366 273h1M559 273h1M366 274h1M558 274h1M367 275h1M558 275h1M367 276h1M557 276h1M367 277h1M557 277h1M368 278h1M556 278h1M368 279h1M556 279h1M369 280h1M555 280h1M369 281h1M555 281h1M370 282h1M554 282h1M370 283h1M554 283h1M371 284h1M553 284h1M371 285h1M553 285h1M372 286h1M552 286h1M372 287h1M552 287h1M373 288h1M551 288h1M373 289h1M551 289h1M374 290h1M550 290h1M374 291h1M550 291h1M375 292h1M549 292h1M375 293h1M549 293h1M376 294h1M548 294h1M376 295h1M548 295h1M377 296h1M547 296h1M377 297h1M547 297h1M378 298h1M546 298h1M378 299h1M546 299h1M379 300h1M545 300h1M379 301h1M545 301h1M380 302h1M544 302h1M381 303h1M544 303h1M381 304h1M543 304h1M382 305h1M543 305h1M382 306h1M542 306h1M383 307h1M542 307h1M383 308h1M541 308h1M384 309h1M541 309h1M384 310h1M540 310h1M385 311h1M540 311h1M385 312h1M539 312h1M386 313h1M539 313h1M386 314h1M538 314h1M387 315h1M538 315h1M387 316h1M537 316h1M388 317h1M537 317h1M388 318h1M536 318h1M389 319h1M536 319h1M389 320h1M535 320h1M390 321h1M535 321h1M391 322h1M534 322h1M391 323h1M534 323h1M392 324h1M533 324h1M392 325h1M533 325h1M393 326h1M532 326h1M393 327h1M531 327h1M394 328h1M531 328h1M395 329h1M530 329h1M395 330h1M529 330h1M396 331h1M529 331h1M396 332h1M528 332h1M397 333h1M528 333h1M397 334h1M527 334h1M398 335h1M526 335h1M398 336h1M526 336h1M399 337h1M525 337h1M400 338h1M524 338h1M400 339h1M524 339h1M401 340h1M523 340h1M402 341h1M522 341h1M402 342h1M522 342h1M403 343h1M521 343h1M404 344h1M520 344h1M404 345h1M520 345h1M405 346h1M519 346h1M406 347h1M518 347h1M406 348h1M518 348h1M407 349h1M517 349h1M408 350h1M516 350h1M408 351h1M516 351h1M409 352h1M515 352h1M410 353h1M514 353h1M411 354h1M514 354h1M411 355h1M513 355h1M412 356h1M512 356h1M413 357h1M512 357h1M414 358h1M511 358h1M414 359h1M510 359h1M415 360h1M509 360h1M416 361h1M509 361h1M417 362h1M508 362h1M417 363h1M507 363h1M418 364h1M507 364h1M419 365h1M506 365h1M420 366h1M505 366h1M421 367h1M504 367h1M421 368h1M503 368h1M422 369h1M502 369h1M423 370h1M501 370h1M424 371h1M501 371h1M425 372h1M500 372h1M426 373h1M499 373h1M426 374h1M498 374h1M427 375h1M497 375h1M428 376h1M496 376h1M429 377h1M495 377h1M430 378h2M493 378h2M432 379h1M492 379h1M433 380h1M491 380h1M434 381h1M490 381h1M435 382h2M488 382h2M437 383h1M487 383h1M438 384h1M486 384h1M439 385h2M484 385h2M441 386h2M482 386h2M443 387h2M480 387h2M445 388h2M478 388h2M447 389h3M476 389h2M450 390h3M472 390h4M453 391h3M469 391h3M456 392h13" stroke="#ff40b0" stroke-width="1" fill="none" transform="translate(0,0.5)"/>
<rect x="93" y="397" width="5" height="1" fill="#000" />
<text x="91" y="402" font-size="11" text-anchor="end" fill="#000" stroke="#000" stroke-width="0.3" >-10</text>
<rect x="93" y="379" width="5" height="1" fill="#000" />
<text x="91" y="384" font-size="11" text-anchor="end" fill="#000" stroke="#000" stroke-width="0.3" >-9</text>
<rect x="93" y="361" width="5" height="1" fill="#000" />
<text x="91" y="366" font-size="11" text-anchor="end" fill="#000" stroke="#000" stroke-width="0.3" >-8</text>
<rect x="93" y="344" width="5" height="1" fill="#000" />
<text x="91" y="349" font-size="11" text-anchor="end" fill="#000" stroke="#000" stroke-width="0.3" >-7</text>
<rect x="93" y="326" width="5" height="1" fill="#000" />
<text x="91" y="331" font-size="11" text-anchor="end" fill="#000" stroke="#000" stroke-width="0.3" >-6</text>
<rect x="93" y="308" width="5" height="1" fill="#000" />
<text x="91" y="313" font-size="11" text-anchor="end" fill="#000" stroke="#000" stroke-width="0.3" >-5</text>
<rect x="93" y="290" width="5" height="1" fill="#000" />
<text x="91" y="295" font-size="11" text-anchor="end" fill="#000" stroke="#000" stroke-width="0.3" >-4</text>
<rect x="93" y="272" width="5" height="1" fill="#000" />
<text x="91" y="277" font-size="11" text-anchor="end" fill="#000" stroke="#000" stroke-width="0.3" >-3</text>
<rect x="93" y="255" width="5" height="1" fill="#000" />
<text x="91" y="260" font-size="11" text-anchor="end" fill="#000" stroke="#000" stroke-width="0.3" >-2</text>
<rect x="93" y="237" width="5" height="1" fill="#000" />
<text x="91" y="242" font-size="11" text-anchor="end" fill="#000" stroke="#000" stroke-width="0.3" >-1</text>
<rect x="93" y="219" width="5" height="1" fill="#000" />
<text x="91" y="224" font-size="11" text-anchor="end" fill="#000" stroke="#000" stroke-width="0.3" >0</text>
<rect x="93" y="201" width="5" height="1" fill="#000" />
<text x="91" y="206" font-size="11" text-anchor="end" fill="#000" stroke="#000" stroke-width="0.3" >1</text>
<rect x="93" y="183" width="5" height="1" fill="#000" />
<text x="91" y="188" font-size="11" text-anchor="end" fill="#000" stroke="#000" stroke-width="0.3" >2</text>
<rect x="93" y="166" width="5" height="1" fill="#000" />
<text x="91" y="171" font-size="11" text-anchor="end" fill="#000" stroke="#000" stroke-width="0.3" >3</text>
<rect x="93" y="148" width="5" height="1" fill="#000" />
<text x="91" y="153" font-size="11" text-anchor="end" fill="#000" stroke="#000" stroke-width="0.3" >4</text>
<rect x="93" y="130" width="5" height="1" fill="#000" />
<text x="91" y="135" font-size="11" text-anchor="end" fill="#000" stroke="#000" stroke-width="0.3" >5</text>
<rect x="93" y="112" width="5" height="1" fill="#000" />
<text x="91" y="117" font-size="11" text-anchor="end" fill="#000" stroke="#000" stroke-width="0.3" >6</text>
<rect x="93" y="94" width="5" height="1" fill="#000" />
<text x="91" y="99" font-size="11" text-anchor="end" fill="#000" stroke="#000" stroke-width="0.3" >7</text>
<rect x="93" y="77" width="5" height="1" fill="#000" />
<text x="91" y="82" font-size="11" text-anchor="end" fill="#000" stroke="#000" stroke-width="0.3" >8</text>
<rect x="93" y="59" width="5" height="1" fill="#000" />
<text x="91" y="64" font-size="11" text-anchor="end" fill="#000" stroke="#000" stroke-width="0.3" >9</text>
<rect x="93" y="41" width="5" height="1" fill="#000" />
<text x="91" y="46" font-size="11" text-anchor="end" fill="#000" stroke="#000" stroke-width="0.3" >10</text>
<rect x="100" y="400" width="1" height="5" fill="#000" />
<text x="99.5" y="416" font-size="11" text-anchor="middle" fill="#000" stroke="#000" stroke-width="0.3" >0</text>
<rect x="119" y="400" width="1" height="5" fill="#000" />
<text x="118.5" y="416" font-size="11" text-anchor="middle" fill="#000" stroke="#000" stroke-width="0.3" >2</text>
<rect x="139" y="400" width="1" height="5" fill="#000" />
<text x="138.5" y="416" font-size="11" text-anchor="middle" fill="#000" stroke="#000" stroke-width="0.3" >4</text>
<rect x="158" y="400" width="1" height="5" fill="#000" />
<text x="157.5" y="416" font-size="11" text-anchor="middle" fill="#000" stroke="#000" stroke-width="0.3" >6</text>
<rect x="177" y="400" width="1" height="5" fill="#000" />
<text x="176.5" y="416" font-size="11" text-anchor="middle" fill="#000" stroke="#000" stroke-width="0.3" >8</text>
<rect x="197" y="400" width="1" height="5" fill="#000" />
<text x="196.5" y="416" font-size="11" text-anchor="middle" fill="#000" stroke="#000" stroke-width="0.3" >10</text>
<rect x="216" y="400" width="1" height="5" fill="#000" />
<text x="215.5" y="416" font-size="11" text-anchor="middle" fill="#000" stroke="#000" stroke-width="0.3" >12</text>
<rect x="235" y="400" width="1" height="5" fill="#000" />
<text x="234.5" y="416" font-size="11" text-anchor="middle" fill="#000" stroke="#000" stroke-width="0.3" >14</text>
<rect x="255" y="400" width="1" height="5" fill="#000" />
<text x="254.5" y="416" font-size="11" text-anchor="middle" fill="#000" stroke="#000" stroke-width="0.3" >16</text>
<rect x="274" y="400" width="1" height="5" fill="#000" />
<text x="273.5" y="416" font-size="11" text-anchor="middle" fill="#000" stroke="#000" stroke-width="0.3" >18</text>
<rect x="293" y="400" width="1" height="5" fill="#000" />
<text x="292.5" y="416" font-size="11" text-anchor="middle" fill="#000" stroke="#000" stroke-width="0.3" >20</text>
<rect x="313" y="400" width="1" height="5" fill="#000" />
<text x="312.5" y="416" font-size="11" text-anchor="middle" fill="#000" stroke="#000" stroke-width="0.3" >22</text>
<rect x="332" y="400" width="1" height="5" fill="#000" />
<text x="331.5" y="416" font-size="11" text-anchor="middle" fill="#000" stroke="#000" stroke-width="0.3" >24</text>
<rect x="351" y="400" width="1" height="5" fill="#000" />
<text x="350.5" y="416" font-size="11" text-anchor="middle" fill="#000" stroke="#000" stroke-width="0.3" >26</text>
<rect x="370" y="400" width="1" height="5" fill="#000" />
<text x="369.5" y="416" font-size="11" text-anchor="middle" fill="#000" stroke="#000" stroke-width="0.3" >28</text>
<rect x="390" y="400" width="1" height="5" fill="#000" />
<text x="389.5" y="416" font-size="11" text-anchor="middle" fill="#000" stroke="#000" stroke-width="0.3" >30</text>
<rect x="409" y="400" width="1" height="5" fill="#000" />
<text x="408.5" y="416" font-size="11" text-anchor="middle" fill="#000" stroke="#000" stroke-width="0.3" >32</text>
<rect x="428" y="400" width="1" height="5" fill="#000" />
<text x="427.5" y="416" font-size="11" text-anchor="middle" fill="#000" stroke="#000" stroke-width="0.3" >34</text>
<rect x="448" y="400" width="1" height="5" fill="#000" />
<text x="447.5" y="416" font-size="11" text-anchor="middle" fill="#000" stroke="#000" stroke-width="0.3" >36</text>
<rect x="467" y="400" width="1" height="5" fill="#000" />
<text x="466.5" y="416" font-size="11" text-anchor="middle" fill="#000" stroke="#000" stroke-width="0.3" >38</text>
<rect x="486" y="400" width="1" height="5" fill="#000" />
<text x="485.5" y="416" font-size="11" text-anchor="middle" fill="#000" stroke="#000" stroke-width="0.3" >40</text>
<rect x="506" y="400" width="1" height="5" fill="#000" />
<text x="505.5" y="416" font-size="11" text-anchor="middle" fill="#000" stroke="#000" stroke-width="0.3" >42</text>
<rect x="525" y="400" width="1" height="5" fill="#000" />
<text x="524.5" y="416" font-size="11" text-anchor="middle" fill="#000" stroke="#000" stroke-width="0.3" >44</text>
<rect x="544" y="400" width="1" height="5" fill="#000" />
<text x="543.5" y="416" font-size="11" text-anchor="middle" fill="#000" stroke="#000" stroke-width="0.3" >46</text>
<rect x="564" y="400" width="1" height="5" fill="#000" />
<text x="563.5" y="416" font-size="11" text-anchor="middle" fill="#000" stroke="#000" stroke-width="0.3" >48</text>
<rect x="583" y="400" width="1" height="5" fill="#000" />
<text x="582.5" y="416" font-size="11" text-anchor="middle" fill="#000" stroke="#000" stroke-width="0.3" >50</text>
<text x="330" y="431" font-size="11" text-anchor="start" fill="#000" stroke="#000" stroke-width="0.3" textLength="21" lengthAdjust="spacingAndGlyphs" >Time</text>
<text transform="translate(69,242) rotate(-90)" font-size="11" stroke="#000" stroke-width="0.3" textLength="47" lengthAdjust="spacingAndGlyphs">Amplitude</text>
<rect x="735" y="104" width="468" height="214" rx="3" ry="3" fill="none" stroke="#808080" stroke-width="6" shape-rendering="auto"/>
<rect x="1198" y="311" width="10" height="4" fill="#fff" />
<polygon points="1198,313 1206,313 1206,320 1203,320 1203,321 1190,321 1190,315 1200,315" fill="#808080"/>
<rect x="1200" y="311" width="6" height="0" fill="#fff" />
<rect x="629.5" y="221.5" width="31" height="17" fill="#fff" stroke="#ff00ff" stroke-width="1"/>
<rect x="631" y="223" width="28" height="14" fill="#ff00ff" />
<rect x="639" y="224" width="19" height="12" fill="#fff" />
<rect x="633" y="224" width="3" height="1" fill="#fff" />
<rect x="632" y="225" width="1" height="2" fill="#fff" />
<rect x="636" y="225" width="1" height="2" fill="#fff" />
<rect x="634" y="225" width="1" height="1" fill="none" />
<rect x="632" y="228" width="5" height="1" fill="#fff" />
<rect x="632" y="231" width="5" height="1" fill="#fff" />
<rect x="632" y="233" width="1" height="2" fill="#fff" />
<rect x="636" y="233" width="1" height="2" fill="#fff" />
<rect x="633" y="234" width="3" height="1" fill="#fff" />
<rect x="634" y="235" width="1" height="1" fill="#fff" />
<text x="640" y="235" font-size="11" text-anchor="start" fill="#000" stroke="#000" stroke-width="0.3" >0</text>
<rect x="661.5" y="221.5" width="62" height="57" fill="#fff" stroke="#ff00ff" stroke-width="1"/>
<rect x="664.0" y="224.0" width="57" height="52" fill="#fff" stroke="#ff00ff" stroke-width="2"/>
<rect x="666.5" y="226.5" width="52" height="47" fill="#fff" stroke="#ff98ff" stroke-width="1"/>
<rect x="667.5" y="227.5" width="31" height="17" fill="#fff" stroke="#9494ff" stroke-width="1"/>
<rect x="669" y="229" width="8" height="14" fill="#9494ff" />
<rect x="676.5" y="229.5" width="20" height="13" fill="#fff" stroke="#9494ff" stroke-width="1"/>
<rect x="671" y="230" width="3" height="1" fill="#fff" />
<rect x="670" y="231" width="1" height="2" fill="#fff" />
<rect x="674" y="231" width="1" height="2" fill="#fff" />
<rect x="672" y="231" width="1" height="1" fill="none" />
<rect x="670" y="234" width="5" height="1" fill="#fff" />
<rect x="670" y="237" width="5" height="1" fill="#fff" />
<rect x="670" y="239" width="1" height="2" fill="#fff" />
<rect x="674" y="239" width="1" height="2" fill="#fff" />
<rect x="671" y="240" width="3" height="1" fill="#fff" />
<rect x="672" y="241" width="1" height="1" fill="#fff" />
<text x="678" y="241" font-size="11" text-anchor="start" fill="#707070" stroke="#707070" stroke-width="0.3" >0</text>
<rect x="699.5" y="227.5" width="18" height="22" fill="#f4f4ff" stroke="#9494ff" stroke-width="1"/>
<rect x="700" y="227" width="1" height="23" fill="#9494ff" />
<rect x="702.5" y="229.5" width="13" height="18" fill="#d4d4ff" stroke="#9494ff" stroke-width="1"/>
<rect x="704" y="232" width="10" height="13" fill="#fff" />
<text x="708" y="243" font-size="11" text-anchor="middle" fill="#c4c4c4" stroke="#c4c4c4" stroke-width="0.3" >0</text>
<rect x="667.5" y="250.5" width="31" height="17" fill="#fff" stroke="#ffc48c" stroke-width="1"/>
<rect x="669" y="252" width="8" height="14" fill="#ffc48c" />
<rect x="676.5" y="252.5" width="20" height="13" fill="#fff" stroke="#ffc48c" stroke-width="1"/>
<rect x="671" y="253" width="3" height="1" fill="#fff" />
<rect x="670" y="254" width="1" height="2" fill="#fff" />
<rect x="674" y="254" width="1" height="2" fill="#fff" />
<rect x="672" y="254" width="1" height="1" fill="none" />
<rect x="670" y="257" width="5" height="1" fill="#fff" />
<rect x="670" y="260" width="5" height="1" fill="#fff" />
<rect x="670" y="262" width="1" height="2" fill="#fff" />
<rect x="674" y="262" width="1" height="2" fill="#fff" />
<rect x="671" y="263" width="3" height="1" fill="#fff" />
<rect x="672" y="264" width="1" height="1" fill="#fff" />
<text x="678" y="264" font-size="11" text-anchor="start" fill="#707070" stroke="#707070" stroke-width="0.3" >0</text>
<rect x="699.5" y="250.5" width="18" height="22" fill="#fff8f0" stroke="#ffc48c" stroke-width="1"/>
<rect x="700" y="250" width="1" height="23" fill="#ffc48c" />
<rect x="702.5" y="252.5" width="13" height="18" fill="#ffe4cc" stroke="#ffc48c" stroke-width="1"/>
<rect x="704" y="255" width="10" height="13" fill="#fff" />
<text x="708" y="266" font-size="11" text-anchor="middle" fill="#c4c4c4" stroke="#c4c4c4" stroke-width="0.3" >0</text>
<rect x="724" y="248" width="8" height="4" fill="#ff00ff" />
<path d="M726 249.5h2M725 250.5h2M730 249.5h2M729 250.5h2" stroke="#fff" stroke-width="1" fill="none"/>
<rect x="748" y="248" width="162" height="4" fill="#ff00ff" />
<path d="M751 249.5h2M750 250.5h2M755 249.5h2M754 250.5h2M759 249.5h2M758 250.5h2M763 249.5h2M762 250.5h2M767 249.5h2M766 250.5h2M771 249.5h2M770 250.5h2M775 249.5h2M774 250.5h2M779 249.5h2M778 250.5h2M783 249.5h2M782 250.5h2M787 249.5h2M786 250.5h2M791 249.5h2M790 250.5h2M795 249.5h2M794 250.5h2M799 249.5h2M798 250.5h2M803 249.5h2M802 250.5h2M807 249.5h2M806 250.5h2M811 249.5h2M810 250.5h2M815 249.5h2M814 250.5h2M819 249.5h2M818 250.5h2M823 249.5h2M822 250.5h2M827 249.5h2M826 250.5h2M831 249.5h2M830 250.5h2M835 249.5h2M834 250.5h2M839 249.5h2M838 250.5h2M843 249.5h2M842 250.5h2M847 249.5h2M846 250.5h2M851 249.5h2M850 250.5h2M855 249.5h2M854 250.5h2M859 249.5h2M858 250.5h2M863 249.5h2M862 250.5h2M867 249.5h2M866 250.5h2M871 249.5h2M870 250.5h2M875 249.5h2M874 250.5h2M879 249.5h2M878 250.5h2M883 249.5h2M882 250.5h2M887 249.5h2M886 250.5h2M891 249.5h2M890 250.5h2M895 249.5h2M894 250.5h2M899 249.5h2M898 250.5h2M903 249.5h2M902 250.5h2M907 249.5h2M906 250.5h2" stroke="#fff" stroke-width="1" fill="none"/>
<rect x="908" y="244" width="4" height="8" fill="#ff00ff" />
<path d="M909 249.5h1M910 248.5h1M910 247.5h1M910 246.5h2M911 245.5h2M910 250.5h1" stroke="#fff" fill="none"/>
<rect x="911" y="244" width="157" height="4" fill="#ff00ff" />
<path d="M915 245.5h2M914 246.5h2M919 245.5h2M918 246.5h2M923 245.5h2M922 246.5h2M927 245.5h2M926 246.5h2M931 245.5h2M930 246.5h2M935 245.5h2M934 246.5h2M939 245.5h2M938 246.5h2M943 245.5h2M942 246.5h2M947 245.5h2M946 246.5h2M951 245.5h2M950 246.5h2M955 245.5h2M954 246.5h2M959 245.5h2M958 246.5h2M963 245.5h2M962 246.5h2M967 245.5h2M966 246.5h2M971 245.5h2M970 246.5h2M975 245.5h2M974 246.5h2M979 245.5h2M978 246.5h2M983 245.5h2M982 246.5h2M987 245.5h2M986 246.5h2M991 245.5h2M990 246.5h2M995 245.5h2M994 246.5h2M999 245.5h2M998 246.5h2M1003 245.5h2M1002 246.5h2M1007 245.5h2M1006 246.5h2M1011 245.5h2M1010 246.5h2M1015 245.5h2M1014 246.5h2M1019 245.5h2M1018 246.5h2M1023 245.5h2M1022 246.5h2M1027 245.5h2M1026 246.5h2M1031 245.5h2M1030 246.5h2M1035 245.5h2M1034 246.5h2M1039 245.5h2M1038 246.5h2M1043 245.5h2M1042 246.5h2M1047 245.5h2M1046 246.5h2M1051 245.5h2M1050 246.5h2M1055 245.5h2M1054 246.5h2M1059 245.5h2M1058 246.5h2M1063 245.5h2M1062 246.5h2M1067 245.5h1M1066 246.5h2" stroke="#fff" stroke-width="1" fill="none"/>
<rect x="733.0" y="245.0" width="14" height="10" fill="#ffffcc" stroke="#ff00ff" stroke-width="2"/>
<polygon points="735,247 745,247 740,252" fill="#ff00ff" shape-rendering="auto"/>
<rect x="1104" y="248" width="86" height="4" fill="#ff00ff" />
<path d="M1106 249.5h2M1105 250.5h2M1110 249.5h2M1109 250.5h2M1114 249.5h2M1113 250.5h2M1118 249.5h2M1117 250.5h2M1122 249.5h2M1121 250.5h2M1126 249.5h2M1125 250.5h2M1130 249.5h2M1129 250.5h2M1134 249.5h2M1133 250.5h2M1138 249.5h2M1137 250.5h2M1142 249.5h2M1141 250.5h2M1146 249.5h2M1145 250.5h2M1150 249.5h2M1149 250.5h2M1154 249.5h2M1153 250.5h2M1158 249.5h2M1157 250.5h2M1162 249.5h2M1161 250.5h2M1166 249.5h2M1165 250.5h2M1170 249.5h2M1169 250.5h2M1174 249.5h2M1173 250.5h2M1178 249.5h2M1177 250.5h2M1182 249.5h2M1181 250.5h2M1186 249.5h2M1185 250.5h2" stroke="#fff" stroke-width="1" fill="none"/>
<rect x="1191.0" y="245.0" width="14" height="10" fill="#ffffcc" stroke="#ff00ff" stroke-width="2"/>
<polygon points="1193,252 1203,252 1198,247" fill="#ff00ff" shape-rendering="auto"/>
<rect x="799.0" y="118.0" width="17" height="15" fill="#fff" stroke="#0000ff" stroke-width="2"/>
<text x="807.5" y="130" font-size="11" text-anchor="middle" fill="#000" stroke="#000" stroke-width="0.3" >50</text>
<rect x="817" y="125" width="18" height="1" fill="#0000ff" />
<circle cx="827.5" cy="125.5" r="2.5" fill="#0000ff" shape-rendering="auto"/>
<rect x="827" y="125" width="1" height="91" fill="#0000ff" />
<rect x="827" y="215" width="9" height="1" fill="#0000ff" />
<rect x="839.5" y="121.5" width="75" height="49" fill="#fff" stroke="#000" stroke-width="1"/>
<rect x="837.5" y="119.5" width="75" height="49" fill="#fff" stroke="#000" stroke-width="1"/>
<rect x="835.5" y="117.5" width="75" height="49" fill="#fff" stroke="#000" stroke-width="1"/>
<rect x="836.0" y="118.0" width="14" height="14" fill="#ffffcc" stroke="#0000ff" stroke-width="2"/>
<text x="843" y="129" font-size="12.5" text-anchor="middle" fill="#0000ff" stroke="#0000ff" stroke-width="0.7" >N</text>
<rect x="846.0" y="146.0" width="14" height="14" fill="#ffffcc" stroke="#0000ff" stroke-width="2"/>
<text x="853" y="158" font-size="13" text-anchor="middle" fill="#0000ff" stroke="#0000ff" stroke-width="0.3" font-weight="bold" >i</text>
<rect x="861" y="153" width="45" height="1" fill="#0000ff" />
<path d="M902.5 166.5 v-8 h8 M902.5 166.5 L911 158" fill="none" stroke="#000" shape-rendering="auto"/>
<rect x="903" y="159" width="8" height="8" fill="#fff" />
<path d="M902.5 166.5 v-8 h8" fill="none" stroke="#000"/><path d="M902.5 166.5 L910.5 158.5" fill="none" stroke="#000" shape-rendering="auto"/>
<rect x="906.5" y="149.5" width="8" height="8" fill="#ffffcc" stroke="#000" stroke-width="1"/>
<rect x="908" y="151" width="1" height="5" fill="#0000ff" />
<rect x="909" y="151" width="1" height="1" fill="#0000ff" />
<rect x="909" y="155" width="1" height="1" fill="#0000ff" />
<rect x="912" y="151" width="1" height="5" fill="#0000ff" />
<rect x="911" y="151" width="1" height="1" fill="#0000ff" />
<rect x="911" y="155" width="1" height="1" fill="#0000ff" />
<rect x="915" y="152" width="7" height="2" fill="#0000ff" />
<rect x="920" y="152" width="2" height="28" fill="#0000ff" />
<rect x="920" y="178" width="78" height="2" fill="#0000ff" />
<rect x="769.0" y="199.0" width="17" height="15" fill="#fff" stroke="#ff7000" stroke-width="2"/>
<text x="777.5" y="211" font-size="11" text-anchor="middle" fill="#000" stroke="#000" stroke-width="0.3" >10</text>
<rect x="787" y="206" width="27" height="1" fill="#ff7000" />
<rect x="813" y="206" width="1" height="16" fill="#ff7000" />
<path d="M775.5 226.5 l4 -4 h12 l-4 4 z M775.5 226.5 v11 h12 v-11 M787.5 237.5 l4 -4 v-11" fill="#ffffcc" stroke="#000" stroke-width="1.2" shape-rendering="auto"/>
<rect x="779" y="224" width="3" height="1" fill="#000" />
<rect x="784" y="224" width="3" height="1" fill="#000" />
<rect x="778" y="229" width="2" height="2" fill="#000" />
<path d="M779.5 232.5 l4 -4 h11 l-4 4 z M779.5 232.5 v11 h11 v-11 M790.5 243.5 l4 -4 v-11" fill="#ffffcc" stroke="#000" stroke-width="1.2" shape-rendering="auto"/>
<rect x="783" y="230" width="3" height="1" fill="#000" />
<rect x="788" y="230" width="3" height="1" fill="#000" />
<rect x="785" y="235" width="2" height="2" fill="#000" />
<rect x="782" y="238" width="2" height="2" fill="#000" />
<rect x="791" y="234" width="1" height="2" fill="#000" />
<rect x="794" y="232" width="9" height="1" fill="#ff7000" />
<rect x="802" y="232" width="1" height="3" fill="#ff7000" />
<rect x="802" y="234" width="6" height="1" fill="#ff7000" />
<polygon points="808.5,219.5 808.5,239.5 828.5,229.5" fill="#ffffcc" stroke="#000" shape-rendering="auto"/>
<path d="M812.3 227.3 l5 4.6 M817.3 227.3 l-5 4.6" stroke="#000" stroke-width="1.7" shape-rendering="auto"/>
<rect x="829" y="229" width="4" height="1" fill="#ff7000" />
<rect x="832" y="223" width="1" height="7" fill="#ff7000" />
<rect x="832" y="223" width="4" height="1" fill="#ff7000" />
<text x="837" y="208" font-size="11" text-anchor="start" fill="#000" stroke="#000" stroke-width="0.3" textLength="71" lengthAdjust="spacingAndGlyphs" >Sine Pattern.vi</text>
<rect x="836.5" y="211.5" width="31" height="31" fill="#fff" stroke="#000" stroke-width="1"/>
<rect x="837" y="212" width="30" height="10" fill="#ffffcc" />
<rect x="836" y="222" width="32" height="1" fill="#000" />
<rect x="845" y="211" width="1" height="12" fill="#000" />
<polygon points="840,215 842,215 845,212.5 845,221 842,219 840,219" fill="#a0a0a0" shape-rendering="auto"/>
<rect x="840" y="215" width="1" height="4" fill="#000" />
<rect x="841" y="215" width="1" height="1" fill="#404040" />
<rect x="841" y="218" width="1" height="1" fill="#404040" />
<path d="M850 217.5 C852 213 855 213 857 217.5 S862 222 864 217.5" fill="none" stroke="#000" stroke-width="1.1" shape-rendering="auto"/>
<rect x="849" y="217" width="16" height="1" fill="#000" />
<polygon points="838,233 843,225 847,225 853,233" fill="url(#chk)"/>
<polygon points="852,232 856.5,240 861.5,240 866,232" fill="url(#chk)"/>
<rect x="838" y="232" width="29" height="1" fill="#000" />
<rect x="868" y="218" width="64" height="2" fill="#ff7000" />
<rect x="930" y="186" width="2" height="34" fill="#ff7000" />
<rect x="930" y="186" width="68" height="2" fill="#ff7000" />
<rect x="998.5" y="175.5" width="31" height="16" fill="#fff" stroke="#000" stroke-width="1"/>
<rect x="1014" y="176" width="15" height="15" fill="#ffffcc" />
<rect x="1013" y="175" width="1" height="17" fill="#000" />
<rect x="1021" y="175" width="1" height="17" fill="#000" />
<rect x="998" y="183" width="16" height="1" fill="#000" />
<rect x="1002" y="178" width="1" height="4" fill="#0000ff" />
<rect x="1002" y="178" width="3" height="1" fill="#0000ff" />
<rect x="1002" y="181" width="3" height="1" fill="#0000ff" />
<rect x="1009" y="178" width="1" height="4" fill="#0000ff" />
<rect x="1007" y="178" width="3" height="1" fill="#0000ff" />
<rect x="1007" y="181" width="3" height="1" fill="#0000ff" />
<rect x="1002" y="186" width="1" height="4" fill="#ff7000" />
<rect x="1002" y="186" width="3" height="1" fill="#ff7000" />
<rect x="1002" y="189" width="3" height="1" fill="#ff7000" />
<rect x="1009" y="186" width="1" height="4" fill="#ff7000" />
<rect x="1007" y="186" width="3" height="1" fill="#ff7000" />
<rect x="1007" y="189" width="3" height="1" fill="#ff7000" />
<rect x="1014" y="182" width="2" height="3" fill="#000" />
<polygon points="1016,181.5 1025,181.5 1025,179.5 1029,183.5 1025,187.5 1025,185.5 1016,185.5" fill="#000" shape-rendering="auto"/>
<circle cx="1016.3" cy="183.5" r="1.1" fill="#ffffcc" shape-rendering="auto"/>
<rect x="1030" y="182" width="14" height="3" fill="#ff00ff" />
<path d="M1031 183.5h2M1035 183.5h2M1039 183.5h2M1043 183.5h1" stroke="#fff" stroke-width="1" fill="none"/>
<rect x="1044" y="182" width="3" height="61" fill="#ff00ff" />
<path d="M1045.5 185v2M1045.5 189v2M1045.5 193v2M1045.5 197v2M1045.5 201v2M1045.5 205v2M1045.5 209v2M1045.5 213v2M1045.5 217v2M1045.5 221v2M1045.5 225v2M1045.5 229v2M1045.5 233v2M1045.5 237v2M1045.5 241v2" stroke="#fff" stroke-width="1" fill="none"/>
<rect x="1044" y="182" width="3" height="1" fill="#ff00ff" />
<rect x="1044" y="249" width="3" height="7" fill="#ff00ff" />
<path d="M1045.5 250v2M1045.5 254v2" stroke="#fff" stroke-width="1" fill="none"/>
<rect x="1047" y="253" width="21" height="3" fill="#ff00ff" />
<path d="M1048 254.5h2M1052 254.5h2M1056 254.5h2M1060 254.5h2M1064 254.5h2" stroke="#fff" stroke-width="1" fill="none"/>
<rect x="1044" y="255" width="3" height="1" fill="#ff00ff" />
<rect x="1044" y="242" width="3" height="1" fill="#ff00ff" />
<rect x="1044" y="249" width="3" height="1" fill="#ff00ff" />
<rect x="1068.5" y="242.5" width="31" height="16" fill="#ffffcc" stroke="#000" stroke-width="1"/>
<rect x="1070.5" y="244.5" width="8" height="4" fill="none" stroke="#000" stroke-width="1"/>
<rect x="1074" y="244" width="1" height="5" fill="#000" />
<rect x="1072" y="246" width="1" height="1" fill="#000" />
<rect x="1076" y="246" width="1" height="1" fill="#000" />
<rect x="1079" y="246" width="1" height="1" fill="#000" />
<rect x="1081" y="246" width="3" height="1" fill="#000" />
<rect x="1082" y="245" width="1" height="3" fill="#000" />
<rect x="1071.5" y="252.5" width="4" height="4" fill="none" stroke="#000" stroke-width="1"/>
<rect x="1077" y="254" width="1" height="1" fill="#000" />
<rect x="1079" y="254" width="1" height="1" fill="#000" />
<rect x="1081" y="254" width="3" height="1" fill="#000" />
<rect x="1082" y="253" width="1" height="3" fill="#000" />
<rect x="1085" y="245" width="1" height="11" fill="#000" />
<rect x="1086" y="244" width="1" height="1" fill="#000" />
<rect x="1086" y="256" width="1" height="1" fill="#000" />
<rect x="1088.5" y="244.5" width="8" height="12" fill="none" stroke="#000" stroke-width="1"/>
<rect x="1092" y="244" width="1" height="13" fill="#000" />
<rect x="1088" y="248" width="9" height="1" fill="#000" />
<rect x="1088" y="252" width="9" height="1" fill="#000" />
<rect x="1068" y="258" width="32" height="1" fill="#000" />
<rect x="1099" y="193" width="4" height="55" fill="#ff00ff" />
<path d="M1101.5 194v2M1100.5 195v2M1101.5 198v2M1100.5 199v2M1101.5 202v2M1100.5 203v2M1101.5 206v2M1100.5 207v2M1101.5 210v2M1100.5 211v2M1101.5 214v2M1100.5 215v2M1101.5 218v2M1100.5 219v2M1101.5 222v2M1100.5 223v2M1101.5 226v2M1100.5 227v2M1101.5 230v2M1100.5 231v2M1101.5 234v2M1100.5 235v2M1101.5 238v2M1100.5 239v2M1101.5 242v2M1100.5 243v2M1101.5 246v2M1100.5 247v1" stroke="#fff" stroke-width="1" fill="none"/>
<rect x="1103" y="189" width="15" height="4" fill="#ff00ff" />
<path d="M1104 190.5h2M1103 191.5h2M1108 190.5h2M1107 191.5h2M1112 190.5h2M1111 191.5h2M1116 190.5h2M1115 191.5h2" stroke="#fff" stroke-width="1" fill="none"/>
<rect x="1099" y="189" width="4" height="4" fill="#ff00ff" />
<path d="M1100 192.5h1M1101 191.5h1M1101 190.5h2" stroke="#fff" fill="none"/>
<rect x="1100" y="247" width="5" height="6" fill="#ff00ff" />
<text x="1119" y="180" font-size="11" text-anchor="start" fill="#000" stroke="#000" stroke-width="0.3" textLength="44" lengthAdjust="spacingAndGlyphs" >XY Graph</text>
<rect x="1118.5" y="183.5" width="31" height="15" fill="#fff" stroke="#ff00ff" stroke-width="1"/>
<rect x="1119" y="185" width="9" height="12" fill="#ffa8ff" />
<polygon points="1122,188 1125,190.5 1125,191.5 1122,194" fill="#000" shape-rendering="auto"/>
<rect x="1124" y="186" width="1" height="10" fill="#ff30ff" />
<rect x="1124" y="186" width="3" height="1" fill="#ff30ff" />
<rect x="1124" y="195" width="3" height="1" fill="#ff30ff" />
<rect x="1144" y="186" width="1" height="10" fill="#ff30ff" />
<rect x="1142" y="186" width="3" height="1" fill="#ff30ff" />
<rect x="1142" y="195" width="3" height="1" fill="#ff30ff" />
<rect x="1127.5" y="188.5" width="4" height="2" fill="#fff" stroke="#ff30ff" stroke-width="1"/>
<rect x="1134" y="188" width="3" height="1" fill="#ff30ff" />
<rect x="1139" y="187" width="2" height="2" fill="#ff30ff" />
<rect x="1126" y="192" width="3" height="2" fill="#ff70ff" />
<rect x="1132" y="191" width="4" height="3" fill="#ff30ff" />
<rect x="1139.5" y="191.5" width="2" height="2" fill="#fff" stroke="#ff30ff" stroke-width="1"/>
<text x="1132" y="282" font-size="11" text-anchor="start" fill="#000" stroke="#000" stroke-width="0.3" textLength="21" lengthAdjust="spacingAndGlyphs" >stop</text>
<rect x="1132.0" y="286.0" width="30" height="14" fill="#fff" stroke="#008000" stroke-width="2"/>
<rect x="1134.5" y="288.5" width="26" height="9" fill="#fff" stroke="#008000" stroke-width="1"/>
<text x="1141" y="296" font-size="8.8" text-anchor="start" fill="#008000" stroke="#008000" stroke-width="0.3" font-weight="bold" >T<tspan x="1148.6">F</tspan></text>
<rect x="1153" y="287" width="9" height="12" fill="#86c986" fill-opacity="0.72"/>
<polygon points="1158,290 1161,292.5 1161,293.5 1158,296" fill="#000" shape-rendering="auto"/>
<rect x="1164" y="293" width="1" height="1" fill="#008000" />
<rect x="1166" y="293" width="1" height="1" fill="#008000" />
<rect x="1168" y="293" width="1" height="1" fill="#008000" />
<rect x="1170" y="293" width="1" height="1" fill="#008000" />
<rect x="1172" y="293" width="1" height="1" fill="#008000" />
<rect x="1174" y="293" width="1" height="1" fill="#008000" />
<rect x="1176" y="293" width="1" height="1" fill="#008000" />
<rect x="1178" y="293" width="1" height="1" fill="#008000" />
<rect x="1179.5" y="285.5" width="15" height="15" fill="#ffffcc" stroke="#008000" stroke-width="1"/>
<polygon points="1184.5,287.5 1189.5,287.5 1192.5,290.5 1192.5,295.5 1189.5,298.5 1184.5,298.5 1181.5,295.5 1181.5,290.5" fill="none" stroke="#000" shape-rendering="auto"/>
<polygon points="1185,289 1189,289 1191,291 1191,295 1189,297 1185,297 1183,295 1183,291" fill="#ff0000" shape-rendering="auto"/>
<rect x="847.0" y="273.0" width="29" height="15" fill="#fff" stroke="#0000ff" stroke-width="2"/>
<text x="861.5" y="285" font-size="11" text-anchor="middle" fill="#000" stroke="#000" stroke-width="0.3" >1000</text>
<rect x="877" y="280" width="8" height="1" fill="#0000ff" />
<rect x="885.5" y="264.5" width="31" height="31" fill="#ffffcc" stroke="#000" stroke-width="1"/>
<rect x="895" y="270" width="12" height="4" fill="#000" />
<rect x="895" y="287" width="12" height="4" fill="#000" />
<polygon points="895,274 907,274 908.5,276 908.5,285 907,287 895,287 893.5,285 893.5,276" fill="#ffffcc" stroke="#000" stroke-width="1.4" shape-rendering="auto"/>
<rect x="909" y="279" width="1" height="3" fill="#000" />
<rect x="900" y="276" width="1" height="6" fill="#000" />
<path d="M900.5 280 l2.5 -3.5" stroke="#000" shape-rendering="auto"/>
<rect x="896" y="280" width="1" height="1" fill="#000" />
<rect x="905" y="280" width="1" height="1" fill="#000" />
<rect x="900" y="284" width="1" height="1" fill="#000" />
<rect x="743.0" y="296.0" width="14" height="14" fill="#ffffcc" stroke="#0000ff" stroke-width="2"/>
<text x="750" y="308" font-size="13" text-anchor="middle" fill="#0000ff" stroke="#0000ff" stroke-width="0.3" font-weight="bold" >i</text>
</svg>
</body></html>
